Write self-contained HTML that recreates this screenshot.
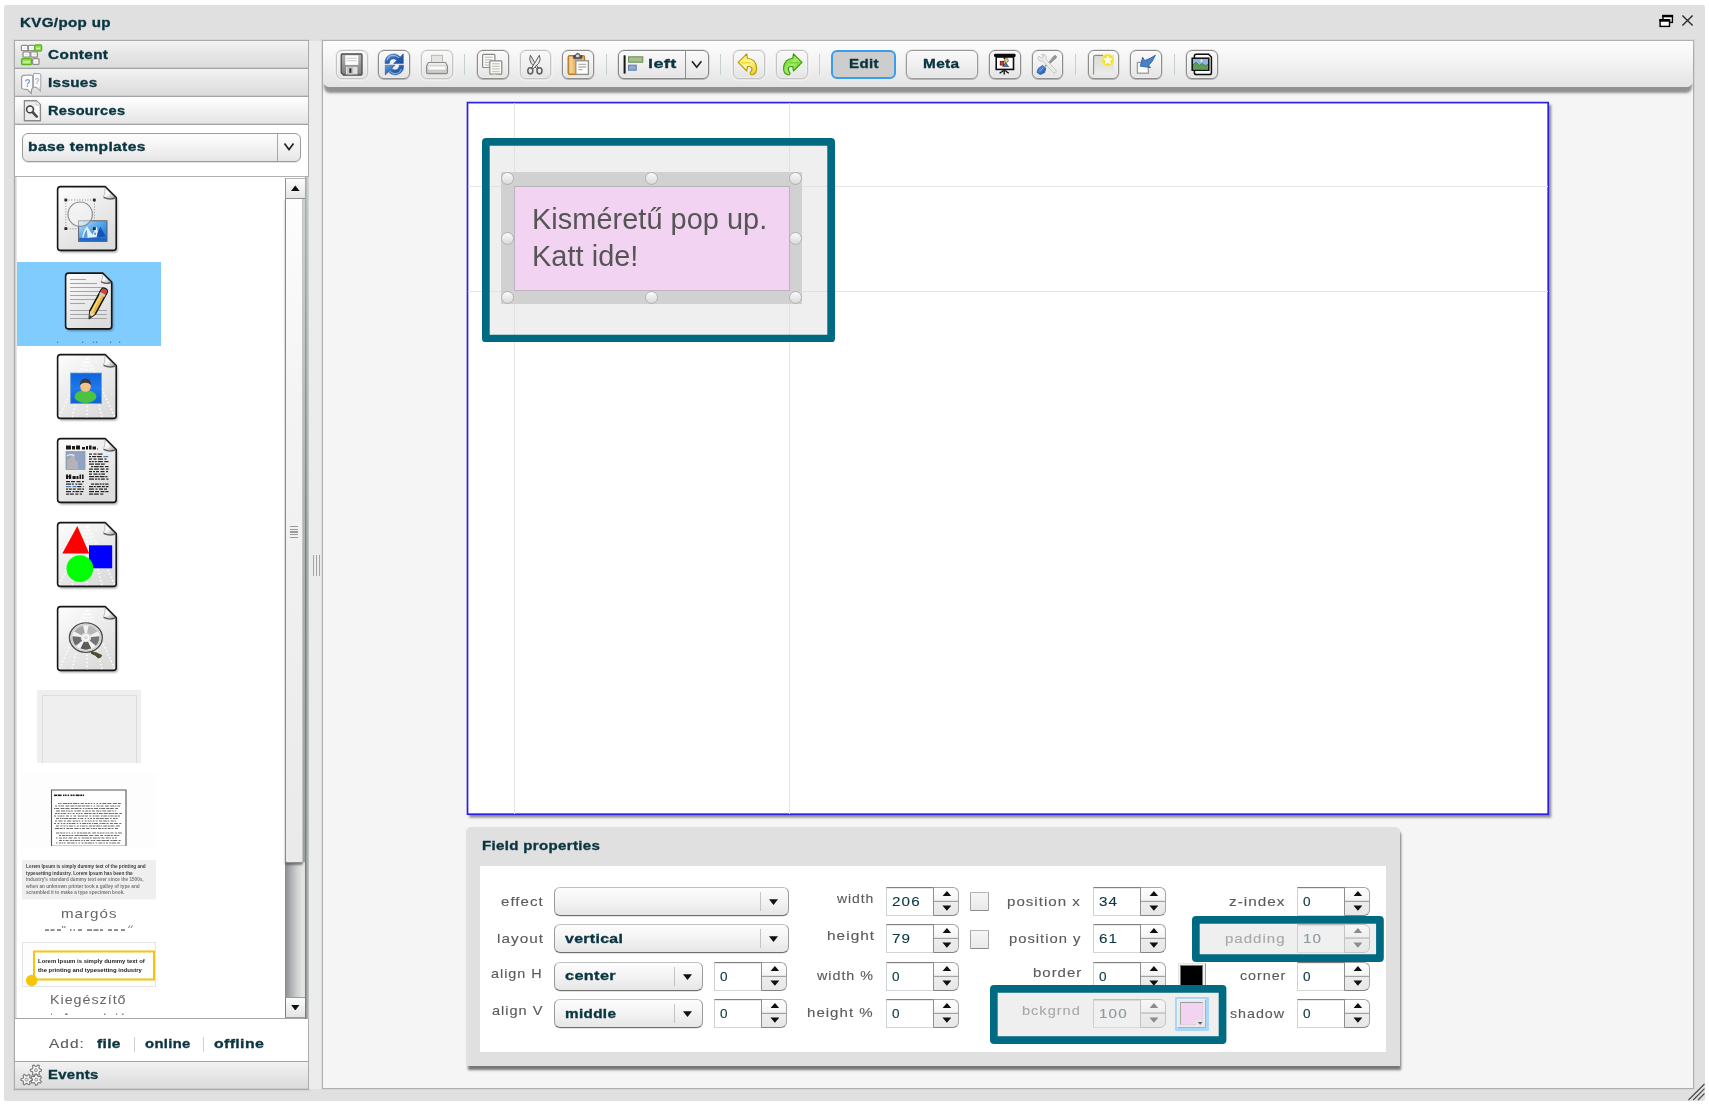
<!DOCTYPE html>
<html>
<head>
<meta charset="utf-8">
<title>KVG/pop up</title>
<style>
html,body{margin:0;padding:0;}
body{width:1709px;height:1108px;background:#fff;position:relative;overflow:hidden;font-family:"Liberation Sans",sans-serif;font-size:14px;color:#0a3742;}
.a{position:absolute;box-sizing:border-box;}
.t{position:absolute;white-space:pre;line-height:16px;transform-origin:0 0;}
.b{font-weight:700;color:#0a3540;-webkit-text-stroke:.35px #0a3540;}
.r{font-weight:400;color:#5a5a5a;-webkit-text-stroke:.12px currentColor;}
.win{left:4px;top:5px;width:1701px;height:1096px;background:#e0e0e0;border-radius:2px;}
.side{left:14px;top:40px;width:295px;height:1050px;background:#fff;border:1px solid #a8acaf;box-shadow:0 0 0 1px rgba(196,200,204,.4);}
.acc{left:15px;width:293px;height:28px;border-bottom:1px solid #a0a4a4;background:linear-gradient(#f3f3f3,#e7e7e7 45%,#dbdbdb);box-shadow:inset 0 -1px 0 rgba(170,174,174,.35);}
.acc.sel{background:linear-gradient(#ffffff,#f2f2f2 50%,#e4e4e4);}
.main{left:322px;top:40px;width:1372px;height:1049px;background:#f5f5f5;border:1px solid #adb1b4;box-shadow:0 0 0 1px rgba(196,200,204,.4);}
.tb{left:323px;top:41px;width:1370px;height:46px;background:linear-gradient(#fdfdfd,#f3f3f3 45%,#e3e3e3);border-radius:0 0 7px 7px;box-shadow:0 6.5px 2.5px -1px rgba(105,105,105,.72);}
.btn{top:50px;width:31px;height:29px;border:1px solid #c3c3c3;border-radius:6px;background:linear-gradient(#f9f9f9,#f0f0f0 50%,#e4e4e4);box-shadow:0 0 0 1px rgba(205,205,205,.35),0 0 0 2px rgba(255,255,255,.35),inset 0 0 0 1px rgba(255,255,255,.3);}
.btn.d{border-color:#8c8c8c;box-shadow:0 0 0 .5px rgba(140,140,140,.4),0 1px .5px 0 rgba(90,90,90,.28),inset 0 0 0 1px rgba(255,255,255,.3);}
.sep{top:54px;width:1px;height:21px;background:#c5d0d0;}
.canvas{left:466px;top:101px;width:1084px;height:715px;background:#fff;border:2px solid #2a22e6;box-shadow:2px 3px 3px rgba(0,0,0,.4);}
.gl{background:#e4e4e4;}
.hlf{background:rgba(222,222,222,.48);}
.hd{width:13px;height:13px;border-radius:7px;border:1px solid #b2b2b2;background:linear-gradient(#fafafa,#ececec 45%,#d9d9d9);}
.fp{left:466px;top:827px;width:934px;height:239px;background:#e0e0e0;border-radius:5px 5px 0 0;box-shadow:1.5px 4px 2.5px -.5px rgba(0,0,0,.52);}
.fpi{left:480px;top:866px;width:906px;height:186px;background:#fff;}
.cb{height:29px;border:1px solid #9a9a9a;border-top-color:#bcc0c0;border-bottom-color:#707070;border-radius:6px;background:linear-gradient(#fdfdfd,#f3f3f3 50%,#e6e6e6);box-shadow:0 .6px 0 rgba(0,0,0,.22);}
.cbs{width:1px;height:19px;background:#c4c4c4;}
.ar{width:9px;height:5.4px;background:#101010;}
.ar.dn{clip-path:polygon(0 0,100% 0,50% 100%);}
.ar.up{clip-path:polygon(50% 0,100% 100%,0 100%);}
.spi{height:29px;background:#fff;border:1px solid #d2d6d6;border-top-color:#808080;border-left-color:#cfd2d2;border-right:none;box-shadow:inset 0 .5px 0 rgba(120,120,120,.35);}
.spb{width:26px;height:29px;border:1px solid #a4a4a4;border-left-color:#8e8e8e;border-bottom-color:#858585;border-radius:0 6px 6px 0;background:linear-gradient(#ffffff,#f5f5f5 46%,#a2a2a2 47.5%,#a2a2a2 50%,#ededed 51.5%,#e7e7e7);}
.chk{width:19px;height:19px;border:1px solid #a6a6a6;border-top-color:#b6b6b6;border-bottom-color:#8c8c8c;background:linear-gradient(#f6f6f6,#e9e9e9);border-radius:1px;}
.num{color:#0a3742;}
.spi.dis{background:#f0f0f0;border-color:#dcdcdc;border-top-color:#bdbdbd;border-left-color:#cfcfcf}
.spb.dis{border-color:#c4c4c4;background:linear-gradient(#f7f7f7,#efefef 45%,#c9c9c9 46.5%,#c9c9c9 50%,#ebebeb 51.5%,#e7e7e7)}
.ar.dis{background:#8c8c8c}
</style>
</head>
<body>
<div id="root" style="position:absolute;left:0;top:0;width:1709px;height:1108px;filter:blur(.45px)">
<div class="a win"></div>
<div class="t b" style="left:19.5px;top:15.3px;font-size:13.4px;letter-spacing:0.3px;transform:scaleX(1.132)">KVG/pop up</div>
<div class="a side"></div>
<div class="a acc" style="top:41px"></div><div class="a acc" style="top:69px"></div><div class="a acc sel" style="top:97px"></div>
<div class="t b" style="left:47.7px;top:47.0px;font-size:13.4px;letter-spacing:0.3px;transform:scaleX(1.145)">Content</div>
<div class="t b" style="left:47.7px;top:75.0px;font-size:13.4px;letter-spacing:0.3px;transform:scaleX(1.138)">Issues</div>
<div class="t b" style="left:47.7px;top:102.9px;font-size:13.4px;letter-spacing:0.3px;transform:scaleX(1.086)">Resources</div>
<div class="a" style="left:15px;top:176px;width:293px;height:843px;border-top:1px solid #aeb2b2;border-bottom:1px solid #a4a8a8;"></div>
<div class="a" style="left:15px;top:177px;width:2px;height:841px;background:linear-gradient(90deg,#c9cdcd,#eceeee)"></div>
<div class="a" style="left:17px;top:262px;width:144px;height:84px;background:#80ccff"></div>
<svg class="a" style="left:0;top:0" width="320" height="1108" viewBox="0 0 320 1108">
<defs>
<linearGradient id="dg" x1="0" y1="0" x2="0.6" y2="1"><stop offset="0" stop-color="#fdfdfd"/><stop offset="1" stop-color="#dddddd"/></linearGradient>
<linearGradient id="fg" x1="0" y1="0" x2="1" y2="1"><stop offset="0" stop-color="#ffffff"/><stop offset=".45" stop-color="#fafafa"/><stop offset="1" stop-color="#9c9c9c"/></linearGradient>
<linearGradient id="bl" x1="0" y1="0" x2="0" y2="1"><stop offset="0" stop-color="#0d63dc"/><stop offset=".5" stop-color="#1f7aea"/><stop offset="1" stop-color="#0e60d6"/></linearGradient>
<linearGradient id="bl2" x1="0" y1="0" x2="1" y2="1"><stop offset="0" stop-color="#d6ecfa"/><stop offset=".35" stop-color="#6cb4ee"/><stop offset=".7" stop-color="#2f8ce2"/><stop offset="1" stop-color="#2274d0"/></linearGradient>
<radialGradient id="rl" cx=".4" cy=".3" r=".8"><stop offset="0" stop-color="#ffffff"/><stop offset=".6" stop-color="#c8c8c8"/><stop offset="1" stop-color="#777"/></radialGradient>
<filter id="ds" x="-10%" y="-10%" width="125%" height="125%"><feGaussianBlur stdDeviation="1"/></filter>
<filter id="b1"><feGaussianBlur stdDeviation=".6"/></filter>
</defs>
<path d="M60.6,186.6 H105.2 L116.2,197.6 V247.39999999999998 Q116.2,250.39999999999998 113.2,250.39999999999998 H60.6 Q57.6,250.39999999999998 57.6,247.39999999999998 V189.6 Q57.6,186.6 60.6,186.6 Z" transform="translate(1.5,2)" fill="#000" opacity=".35" filter="url(#ds)"/>
<path d="M60.6,186.6 H105.2 L116.2,197.6 V247.39999999999998 Q116.2,250.39999999999998 113.2,250.39999999999998 H60.6 Q57.6,250.39999999999998 57.6,247.39999999999998 V189.6 Q57.6,186.6 60.6,186.6 Z" fill="url(#dg)" stroke="#161616" stroke-width="1.6" stroke-linejoin="round"/>
<path d="M104.9,187.6 L115.2,197.9 Q109.2,199.79999999999998 103.60000000000001,197.0 Q105.8,191.6 104.9,187.6 Z" fill="url(#fg)" stroke="#9a9a9a" stroke-width=".6"/>
<path d="M115.2,198.2 Q109.2,200.2 103.60000000000001,197.4" fill="none" stroke="#2c2c2c" stroke-width="1.3" opacity=".7" filter="url(#b1)"/>
<rect x="65.8" y="200" width="28.6" height="28.8" fill="none" stroke="#8a8a8a" stroke-width="1" stroke-dasharray="1 1.7"/>
<rect x="78.6" y="220.8" width="28.4" height="20.6" fill="url(#bl2)" stroke="#5c6068" stroke-width="1"/>
<g filter="url(#b1)"><path d="M82,238.5 Q83.5,229.5 87.3,226.6 Q89.5,231 92.6,234.6 Q95,229.5 96.8,226.4 L98,233 L96.4,237 L88,238 Z" fill="#f2f8fd" opacity=".92"/><path d="M97.2,233.5 L100.4,226.8 L105.8,236.4 L97.4,237.4 Z" fill="#1a4cac" opacity=".9"/><path d="M83.5,238 Q84.5,232 86.8,229.5 L87.6,237.6 Z" fill="#3a82d4" opacity=".8"/><rect x="79.2" y="237.8" width="27.2" height="3" fill="#1c62c2" opacity=".9"/><rect x="94.4" y="232.6" width="1.4" height="2.4" fill="#5a7ac8"/></g>
<circle cx="80.2" cy="214.2" r="12.2" fill="#f6f6f6" fill-opacity=".45" stroke="#848484" stroke-width="1.2" stroke-opacity=".9"/>
<rect x="64.39999999999999" y="198.6" width="2.8" height="2.8" fill="#262626"/>
<rect x="92.89999999999999" y="198.6" width="2.8" height="2.8" fill="#262626"/>
<rect x="64.39999999999999" y="227.2" width="2.8" height="2.8" fill="#262626"/>
<rect x="92.89999999999999" y="227.2" width="2.8" height="2.8" fill="#262626"/>
<path d="M68.6,273.1 H102.69999999999999 L111.69999999999999,282.1 V325.90000000000003 Q111.69999999999999,328.90000000000003 108.69999999999999,328.90000000000003 H68.6 Q65.6,328.90000000000003 65.6,325.90000000000003 V276.1 Q65.6,273.1 68.6,273.1 Z" transform="translate(1.5,2)" fill="#000" opacity=".35" filter="url(#ds)"/>
<path d="M68.6,273.1 H102.69999999999999 L111.69999999999999,282.1 V325.90000000000003 Q111.69999999999999,328.90000000000003 108.69999999999999,328.90000000000003 H68.6 Q65.6,328.90000000000003 65.6,325.90000000000003 V276.1 Q65.6,273.1 68.6,273.1 Z" fill="url(#dg)" stroke="#161616" stroke-width="1.6" stroke-linejoin="round"/>
<path d="M102.39999999999999,274.1 L110.69999999999999,282.40000000000003 Q106.69999999999999,284.3 101.1,281.5 Q103.29999999999998,278.1 102.39999999999999,274.1 Z" fill="url(#fg)" stroke="#9a9a9a" stroke-width=".6"/>
<path d="M110.69999999999999,282.70000000000005 Q106.69999999999999,284.70000000000005 101.1,281.90000000000003" fill="none" stroke="#2c2c2c" stroke-width="1.3" opacity=".7" filter="url(#b1)"/>
<line x1="70" y1="279.5" x2="86" y2="279.5" stroke="#a5a5a5" stroke-width="1.1"/>
<line x1="70" y1="283.5" x2="97" y2="283.5" stroke="#a5a5a5" stroke-width="1.1"/>
<line x1="70" y1="287.5" x2="103" y2="287.5" stroke="#a5a5a5" stroke-width="1.1"/>
<line x1="70" y1="291.5" x2="103" y2="291.5" stroke="#a5a5a5" stroke-width="1.1"/>
<line x1="70" y1="295.5" x2="103" y2="295.5" stroke="#a5a5a5" stroke-width="1.1"/>
<line x1="70" y1="299.5" x2="103" y2="299.5" stroke="#a5a5a5" stroke-width="1.1"/>
<line x1="70" y1="303.5" x2="85" y2="303.5" stroke="#a5a5a5" stroke-width="1.1"/>
<line x1="70" y1="310.5" x2="107" y2="310.5" stroke="#a5a5a5" stroke-width="1.1"/>
<line x1="70" y1="314.5" x2="107" y2="314.5" stroke="#a5a5a5" stroke-width="1.1"/>
<line x1="70" y1="318.5" x2="107" y2="318.5" stroke="#a5a5a5" stroke-width="1.1"/>
<g transform="translate(89.3,318.5) rotate(-61.5)"><path d="M0,0 L7,-3.2 H31 Q34,-3.2 34,0 Q34,3.2 31,3.2 H7 Z" fill="#e9b93f" stroke="#141414" stroke-width="1.5" stroke-linejoin="round"/><path d="M7,-1 H29" stroke="#f7dc8a" stroke-width="1.4"/><path d="M28.5,-3 H31 Q33.6,-3 33.6,0 Q33.6,3 31,3 H28.5 Z" fill="#d2453a"/><path d="M26,-3 H28.5 V3 H26 Z" fill="#c9c9c9"/><path d="M0,0 L7,-3 V3 Z" fill="#e8cfa4"/><path d="M0,0 L3,-1.4 V1.4 Z" fill="#222"/></g>
<rect x="57" y="341.6" width="1.2" height="1.4" fill="#4d7f9e"/>
<rect x="82" y="341.6" width="1.2" height="1.4" fill="#4d7f9e"/>
<rect x="93" y="341.6" width="1.2" height="1.4" fill="#4d7f9e"/>
<rect x="96" y="341.6" width="1.2" height="1.4" fill="#4d7f9e"/>
<rect x="110" y="341.6" width="1.2" height="1.4" fill="#4d7f9e"/>
<rect x="119" y="341.6" width="1.2" height="1.4" fill="#4d7f9e"/>
<path d="M60.6,354.6 H105.2 L116.2,365.6 V415.40000000000003 Q116.2,418.40000000000003 113.2,418.40000000000003 H60.6 Q57.6,418.40000000000003 57.6,415.40000000000003 V357.6 Q57.6,354.6 60.6,354.6 Z" transform="translate(1.5,2)" fill="#000" opacity=".35" filter="url(#ds)"/>
<path d="M60.6,354.6 H105.2 L116.2,365.6 V415.40000000000003 Q116.2,418.40000000000003 113.2,418.40000000000003 H60.6 Q57.6,418.40000000000003 57.6,415.40000000000003 V357.6 Q57.6,354.6 60.6,354.6 Z" fill="url(#dg)" stroke="#161616" stroke-width="1.6" stroke-linejoin="round"/>
<path d="M104.9,355.6 L115.2,365.90000000000003 Q109.2,367.8 103.60000000000001,365.0 Q105.8,359.6 104.9,355.6 Z" fill="url(#fg)" stroke="#9a9a9a" stroke-width=".6"/>
<path d="M115.2,366.20000000000005 Q109.2,368.20000000000005 103.60000000000001,365.40000000000003" fill="none" stroke="#2c2c2c" stroke-width="1.3" opacity=".7" filter="url(#b1)"/>
<line x1="85.9" y1="358" x2="59" y2="417.5" stroke="#fff" stroke-width="1.5" stroke-dasharray="1.5 2.2"/>
<line x1="86.4" y1="358" x2="72" y2="417.5" stroke="#fff" stroke-width="1.5" stroke-dasharray="1.5 2.2"/>
<line x1="87.0" y1="358" x2="87" y2="417.5" stroke="#fff" stroke-width="1.5" stroke-dasharray="1.5 2.2"/>
<line x1="87.6" y1="358" x2="102" y2="417.5" stroke="#fff" stroke-width="1.5" stroke-dasharray="1.5 2.2"/>
<line x1="88.1" y1="358" x2="115" y2="417.5" stroke="#fff" stroke-width="1.5" stroke-dasharray="1.5 2.2"/>
<rect x="70.5" y="373" width="31" height="30.5" fill="url(#bl)" stroke="#6f9fd6" stroke-width=".8"/>
<g filter="url(#b1)"><ellipse cx="85.5" cy="396.5" rx="11" ry="6.5" fill="#4dc23f"/><circle cx="85.5" cy="386.5" r="5.3" fill="#f2c48a"/><path d="M79.8,385 Q80,378.5 85.5,378.5 Q91,378.5 91.2,385 Q88,382.5 85.5,382.8 Q83,382.5 79.8,385 Z" fill="#3a3a3a"/></g>
<path d="M60.6,438.6 H105.2 L116.2,449.6 V499.40000000000003 Q116.2,502.40000000000003 113.2,502.40000000000003 H60.6 Q57.6,502.40000000000003 57.6,499.40000000000003 V441.6 Q57.6,438.6 60.6,438.6 Z" transform="translate(1.5,2)" fill="#000" opacity=".35" filter="url(#ds)"/>
<path d="M60.6,438.6 H105.2 L116.2,449.6 V499.40000000000003 Q116.2,502.40000000000003 113.2,502.40000000000003 H60.6 Q57.6,502.40000000000003 57.6,499.40000000000003 V441.6 Q57.6,438.6 60.6,438.6 Z" fill="url(#dg)" stroke="#161616" stroke-width="1.6" stroke-linejoin="round"/>
<path d="M104.9,439.6 L115.2,449.90000000000003 Q109.2,451.8 103.60000000000001,449.0 Q105.8,443.6 104.9,439.6 Z" fill="url(#fg)" stroke="#9a9a9a" stroke-width=".6"/>
<path d="M115.2,450.20000000000005 Q109.2,452.20000000000005 103.60000000000001,449.40000000000003" fill="none" stroke="#2c2c2c" stroke-width="1.3" opacity=".7" filter="url(#b1)"/>
<g fill="#1c1c1c">
<rect x="66" y="445.5" width="5" height="4"/><rect x="72" y="446" width="3" height="3.5"/><rect x="76" y="445.5" width="4" height="4"/><rect x="82" y="447" width="3" height="2.5"/><rect x="86" y="446" width="2" height="3.5"/><rect x="89" y="445.5" width="2.5" height="4"/><rect x="92.5" y="446.5" width="3.5" height="3"/><rect x="97" y="448.5" width="1" height="1"/>
<rect x="66" y="474.5" width="2.2" height="4.5"/><rect x="69" y="474.5" width="2.2" height="4.5"/><rect x="67" y="476.3" width="3" height="1"/><rect x="72.5" y="476" width="3.2" height="3"/><rect x="76.5" y="476" width="2" height="3"/><rect x="79.5" y="474.5" width="1.6" height="4.5"/><rect x="82" y="474.5" width="1.6" height="4.5"/>
</g>
<rect x="66" y="451.5" width="19" height="18" fill="#8fa4c4" stroke="#9a9a9a" stroke-width=".8"/><path d="M67,469 V460 l4,-3 v-3 h4 v6 l3,2 v7 z" fill="#b9b4b4" opacity=".9" filter="url(#b1)"/><path d="M67,456 q4,-3 7,0" stroke="#dfe8f4" stroke-width="1.5" fill="none" filter="url(#b1)"/>
<rect x="89.0" y="453.5" width="3.0" height="1.2" fill="#222"/>
<rect x="93.5" y="453.5" width="3.0" height="1.2" fill="#222"/>
<rect x="97.5" y="453.5" width="5.0" height="1.2" fill="#222"/>
<rect x="89.0" y="456" width="2.0" height="1.2" fill="#222"/>
<rect x="92.0" y="456" width="4.0" height="1.2" fill="#222"/>
<rect x="96.8" y="456" width="5.0" height="1.2" fill="#222"/>
<rect x="103.3" y="456" width="5.0" height="1.2" fill="#4a78b0"/>
<rect x="89.0" y="458.5" width="3.0" height="1.2" fill="#222"/>
<rect x="93.5" y="458.5" width="3.0" height="1.2" fill="#222"/>
<rect x="98.0" y="458.5" width="5.0" height="1.2" fill="#222"/>
<rect x="104.5" y="458.5" width="2.0" height="1.2" fill="#222"/>
<rect x="89.0" y="461" width="2.0" height="1.2" fill="#222"/>
<rect x="91.8" y="461" width="2.0" height="1.2" fill="#222"/>
<rect x="94.8" y="461" width="2.0" height="1.2" fill="#222"/>
<rect x="97.8" y="461" width="5.0" height="1.2" fill="#222"/>
<rect x="104.3" y="461" width="4.2" height="1.2" fill="#222"/>
<rect x="89.0" y="463.5" width="5.0" height="1.2" fill="#222"/>
<rect x="95.0" y="463.5" width="5.0" height="1.2" fill="#222"/>
<rect x="100.8" y="463.5" width="4.0" height="1.2" fill="#222"/>
<rect x="91.0" y="466" width="2.0" height="1.2" fill="#222"/>
<rect x="93.8" y="466" width="5.0" height="1.2" fill="#222"/>
<rect x="99.6" y="466" width="4.0" height="1.2" fill="#222"/>
<rect x="105.1" y="466" width="3.4" height="1.2" fill="#222"/>
<rect x="89.0" y="468.5" width="4.0" height="1.2" fill="#222"/>
<rect x="94.0" y="468.5" width="5.0" height="1.2" fill="#222"/>
<rect x="100.5" y="468.5" width="4.0" height="1.2" fill="#222"/>
<rect x="106.0" y="468.5" width="2.5" height="1.2" fill="#222"/>
<rect x="89.0" y="471" width="3.0" height="1.2" fill="#222"/>
<rect x="93.0" y="471" width="2.0" height="1.2" fill="#222"/>
<rect x="96.0" y="471" width="3.0" height="1.2" fill="#222"/>
<rect x="100.5" y="471" width="4.0" height="1.2" fill="#222"/>
<rect x="106.0" y="471" width="2.0" height="1.2" fill="#222"/>
<rect x="89.0" y="473.5" width="3.0" height="1.2" fill="#222"/>
<rect x="93.5" y="473.5" width="4.0" height="1.2" fill="#222"/>
<rect x="98.5" y="473.5" width="2.0" height="1.2" fill="#222"/>
<rect x="101.3" y="473.5" width="3.7" height="1.2" fill="#222"/>
<rect x="89.0" y="476" width="5.0" height="1.2" fill="#222"/>
<rect x="94.8" y="476" width="4.0" height="1.2" fill="#222"/>
<rect x="99.6" y="476" width="5.0" height="1.2" fill="#222"/>
<rect x="105.4" y="476" width="2.0" height="1.2" fill="#222"/>
<rect x="89.0" y="478.5" width="5.0" height="1.2" fill="#222"/>
<rect x="95.0" y="478.5" width="2.0" height="1.2" fill="#222"/>
<rect x="97.8" y="478.5" width="2.0" height="1.2" fill="#222"/>
<rect x="100.8" y="478.5" width="4.0" height="1.2" fill="#222"/>
<rect x="106.3" y="478.5" width="2.2" height="1.2" fill="#222"/>
<rect x="91.0" y="483.5" width="3.0" height="1.2" fill="#222"/>
<rect x="94.8" y="483.5" width="4.0" height="1.2" fill="#222"/>
<rect x="99.6" y="483.5" width="2.0" height="1.2" fill="#222"/>
<rect x="102.4" y="483.5" width="2.0" height="1.2" fill="#222"/>
<rect x="105.2" y="483.5" width="3.3" height="1.2" fill="#222"/>
<rect x="89.0" y="486" width="4.0" height="1.2" fill="#222"/>
<rect x="93.8" y="486" width="2.0" height="1.2" fill="#222"/>
<rect x="96.8" y="486" width="4.0" height="1.2" fill="#222"/>
<rect x="101.8" y="486" width="3.0" height="1.2" fill="#222"/>
<rect x="105.8" y="486" width="2.7" height="1.2" fill="#222"/>
<rect x="89.0" y="488.5" width="5.0" height="1.2" fill="#222"/>
<rect x="95.5" y="488.5" width="2.0" height="1.2" fill="#222"/>
<rect x="99.0" y="488.5" width="4.0" height="1.2" fill="#222"/>
<rect x="104.0" y="488.5" width="3.0" height="1.2" fill="#222"/>
<rect x="89.0" y="491" width="5.0" height="1.2" fill="#222"/>
<rect x="95.0" y="491" width="4.0" height="1.2" fill="#222"/>
<rect x="100.5" y="491" width="4.0" height="1.2" fill="#222"/>
<rect x="105.3" y="491" width="3.2" height="1.2" fill="#222"/>
<rect x="89.0" y="493.5" width="4.0" height="1.2" fill="#222"/>
<rect x="93.8" y="493.5" width="5.0" height="1.2" fill="#222"/>
<rect x="100.3" y="493.5" width="3.0" height="1.2" fill="#222"/>
<rect x="66.0" y="481" width="4.0" height="1.2" fill="#222"/>
<rect x="71.0" y="481" width="4.0" height="1.2" fill="#222"/>
<rect x="76.5" y="481" width="4.0" height="1.2" fill="#222"/>
<rect x="82.0" y="481" width="2.0" height="1.2" fill="#222"/>
<rect x="66.0" y="483.5" width="5.0" height="1.2" fill="#222"/>
<rect x="71.8" y="483.5" width="2.0" height="1.2" fill="#222"/>
<rect x="75.3" y="483.5" width="2.0" height="1.2" fill="#222"/>
<rect x="78.3" y="483.5" width="4.0" height="1.2" fill="#222"/>
<rect x="66.0" y="486" width="5.0" height="1.2" fill="#4a78b0"/>
<rect x="72.5" y="486" width="4.0" height="1.2" fill="#4a78b0"/>
<rect x="77.3" y="486" width="4.0" height="1.2" fill="#222"/>
<rect x="82.8" y="486" width="1.2" height="1.2" fill="#4a78b0"/>
<rect x="66.0" y="488.5" width="2.0" height="1.2" fill="#222"/>
<rect x="68.8" y="488.5" width="3.0" height="1.2" fill="#222"/>
<rect x="72.8" y="488.5" width="3.0" height="1.2" fill="#222"/>
<rect x="77.3" y="488.5" width="4.0" height="1.2" fill="#222"/>
<rect x="82.1" y="488.5" width="1.9" height="1.2" fill="#222"/>
<rect x="66.0" y="491" width="5.0" height="1.2" fill="#222"/>
<rect x="72.5" y="491" width="2.0" height="1.2" fill="#222"/>
<rect x="75.3" y="491" width="4.0" height="1.2" fill="#222"/>
<rect x="80.3" y="491" width="3.0" height="1.2" fill="#222"/>
<rect x="66.0" y="493.5" width="3.0" height="1.2" fill="#222"/>
<rect x="69.8" y="493.5" width="4.0" height="1.2" fill="#222"/>
<rect x="75.3" y="493.5" width="3.0" height="1.2" fill="#222"/>
<rect x="79.8" y="493.5" width="2.2" height="1.2" fill="#222"/>
<path d="M60.6,522.6 H105.2 L116.2,533.6 V583.4 Q116.2,586.4 113.2,586.4 H60.6 Q57.6,586.4 57.6,583.4 V525.6 Q57.6,522.6 60.6,522.6 Z" transform="translate(1.5,2)" fill="#000" opacity=".35" filter="url(#ds)"/>
<path d="M60.6,522.6 H105.2 L116.2,533.6 V583.4 Q116.2,586.4 113.2,586.4 H60.6 Q57.6,586.4 57.6,583.4 V525.6 Q57.6,522.6 60.6,522.6 Z" fill="url(#dg)" stroke="#161616" stroke-width="1.6" stroke-linejoin="round"/>
<path d="M104.9,523.6 L115.2,533.9 Q109.2,535.8000000000001 103.60000000000001,533.0 Q105.8,527.6 104.9,523.6 Z" fill="url(#fg)" stroke="#9a9a9a" stroke-width=".6"/>
<path d="M115.2,534.2 Q109.2,536.2 103.60000000000001,533.4" fill="none" stroke="#2c2c2c" stroke-width="1.3" opacity=".7" filter="url(#b1)"/>
<line x1="85.9" y1="526" x2="59" y2="585.5" stroke="#fff" stroke-width="1.5" stroke-dasharray="1.5 2.2"/>
<line x1="86.4" y1="526" x2="72" y2="585.5" stroke="#fff" stroke-width="1.5" stroke-dasharray="1.5 2.2"/>
<line x1="87.0" y1="526" x2="87" y2="585.5" stroke="#fff" stroke-width="1.5" stroke-dasharray="1.5 2.2"/>
<line x1="87.6" y1="526" x2="102" y2="585.5" stroke="#fff" stroke-width="1.5" stroke-dasharray="1.5 2.2"/>
<line x1="88.1" y1="526" x2="115" y2="585.5" stroke="#fff" stroke-width="1.5" stroke-dasharray="1.5 2.2"/>
<path d="M77.3,526 L62.3,553.5 H89.2 Z" fill="#ff0000"/>
<rect x="89" y="545.3" width="23.2" height="23" fill="#0000ff"/>
<circle cx="79.9" cy="568.6" r="13.4" fill="#00ff00"/>
<path d="M60.6,606.6 H105.2 L116.2,617.6 V667.4 Q116.2,670.4 113.2,670.4 H60.6 Q57.6,670.4 57.6,667.4 V609.6 Q57.6,606.6 60.6,606.6 Z" transform="translate(1.5,2)" fill="#000" opacity=".35" filter="url(#ds)"/>
<path d="M60.6,606.6 H105.2 L116.2,617.6 V667.4 Q116.2,670.4 113.2,670.4 H60.6 Q57.6,670.4 57.6,667.4 V609.6 Q57.6,606.6 60.6,606.6 Z" fill="url(#dg)" stroke="#161616" stroke-width="1.6" stroke-linejoin="round"/>
<path d="M104.9,607.6 L115.2,617.9 Q109.2,619.8000000000001 103.60000000000001,617.0 Q105.8,611.6 104.9,607.6 Z" fill="url(#fg)" stroke="#9a9a9a" stroke-width=".6"/>
<path d="M115.2,618.2 Q109.2,620.2 103.60000000000001,617.4" fill="none" stroke="#2c2c2c" stroke-width="1.3" opacity=".7" filter="url(#b1)"/>
<line x1="85.9" y1="610" x2="59" y2="669.5" stroke="#fff" stroke-width="1.5" stroke-dasharray="1.5 2.2"/>
<line x1="86.4" y1="610" x2="72" y2="669.5" stroke="#fff" stroke-width="1.5" stroke-dasharray="1.5 2.2"/>
<line x1="87.0" y1="610" x2="87" y2="669.5" stroke="#fff" stroke-width="1.5" stroke-dasharray="1.5 2.2"/>
<line x1="87.6" y1="610" x2="102" y2="669.5" stroke="#fff" stroke-width="1.5" stroke-dasharray="1.5 2.2"/>
<line x1="88.1" y1="610" x2="115" y2="669.5" stroke="#fff" stroke-width="1.5" stroke-dasharray="1.5 2.2"/>
<g transform="translate(85.9,637.6) scale(1,.9)"><circle r="16.4" fill="#f2f2f2" stroke="#505050" stroke-width="1.5"/><circle r="14.6" fill="none" stroke="#cfcfcf" stroke-width="1.6"/>
<path d="M1.08,-5.09 L2.79,-13.11 A13.4,13.4 0 0 1 11.60,-6.70 L4.50,-2.60 A5.2,5.2 0 0 0 1.08,-5.09 Z" fill="#4c4c4c" opacity="0.35" filter="url(#b1)"/>
<path d="M5.17,-0.54 L13.33,-1.40 A13.4,13.4 0 0 1 9.96,8.97 L3.86,3.48 A5.2,5.2 0 0 0 5.17,-0.54 Z" fill="#4c4c4c" opacity="0.75" filter="url(#b1)"/>
<path d="M2.12,4.75 L5.45,12.24 A13.4,13.4 0 0 1 -5.45,12.24 L-2.12,4.75 A5.2,5.2 0 0 0 2.12,4.75 Z" fill="#4c4c4c" opacity="0.9" filter="url(#b1)"/>
<path d="M-3.86,3.48 L-9.96,8.97 A13.4,13.4 0 0 1 -13.33,-1.40 L-5.17,-0.54 A5.2,5.2 0 0 0 -3.86,3.48 Z" fill="#4c4c4c" opacity="0.8" filter="url(#b1)"/>
<path d="M-4.50,-2.60 L-11.60,-6.70 A13.4,13.4 0 0 1 -2.79,-13.11 L-1.08,-5.09 A5.2,5.2 0 0 0 -4.50,-2.60 Z" fill="#4c4c4c" opacity="0.45" filter="url(#b1)"/>
<circle r="4.2" fill="#fbfbfb" stroke="#c4c4c4" stroke-width=".7"/><circle r="1.5" fill="#e6e6e6" stroke="#b0b0b0" stroke-width=".5"/></g>
<path d="M91.5,651.8 q5.5,.6 10.3,3.6 q-.6,2.4 -3.6,2.6 q-2.4,-3.2 -6.7,-4.4 z" fill="#5a4a32" stroke="#352c1c" stroke-width=".7" filter="url(#b1)"/>
<rect x="37" y="690" width="104" height="73" fill="#efefef"/>
<path d="M42.5,763 V695.5 H136.5 V763" fill="none" stroke="#dcdcdc" stroke-width="1"/>
<rect x="21.5" y="773.5" width="134.5" height="73.5" fill="#fdfdfd"/>
<path d="M51.5,846 V790 H126 V846" fill="#fff" stroke="#555" stroke-width="1.1"/>
<rect x="54.0" y="794.5" width="3.0" height="1.6" fill="#222" opacity="1"/>
<rect x="57.6" y="794.5" width="4.0" height="1.6" fill="#222" opacity="1"/>
<rect x="63.0" y="794.5" width="1.5" height="1.6" fill="#222" opacity="1"/>
<rect x="65.1" y="794.5" width="1.5" height="1.6" fill="#222" opacity="1"/>
<rect x="67.6" y="794.5" width="1.5" height="1.6" fill="#222" opacity="1"/>
<rect x="70.5" y="794.5" width="2.0" height="1.6" fill="#222" opacity="1"/>
<rect x="73.1" y="794.5" width="1.5" height="1.6" fill="#222" opacity="1"/>
<rect x="75.6" y="794.5" width="4.0" height="1.6" fill="#222" opacity="1"/>
<rect x="80.2" y="794.5" width="2.0" height="1.6" fill="#222" opacity="1"/>
<rect x="82.8" y="794.5" width="1.2" height="1.6" fill="#222" opacity="1"/>
<rect x="58.0" y="803" width="1.5" height="1" fill="#333" opacity="0.72"/>
<rect x="60.1" y="803" width="1.5" height="1" fill="#333" opacity="0.72"/>
<rect x="63.0" y="803" width="4.0" height="1" fill="#333" opacity="0.72"/>
<rect x="67.6" y="803" width="2.0" height="1" fill="#333" opacity="0.72"/>
<rect x="70.2" y="803" width="2.0" height="1" fill="#333" opacity="0.72"/>
<rect x="73.2" y="803" width="4.0" height="1" fill="#333" opacity="0.72"/>
<rect x="77.8" y="803" width="1.5" height="1" fill="#333" opacity="0.72"/>
<rect x="80.7" y="803" width="3.0" height="1" fill="#333" opacity="0.72"/>
<rect x="85.1" y="803" width="2.0" height="1" fill="#333" opacity="0.72"/>
<rect x="87.7" y="803" width="2.0" height="1" fill="#333" opacity="0.72"/>
<rect x="90.7" y="803" width="1.5" height="1" fill="#333" opacity="0.72"/>
<rect x="93.6" y="803" width="1.5" height="1" fill="#333" opacity="0.72"/>
<rect x="96.5" y="803" width="1.5" height="1" fill="#333" opacity="0.72"/>
<rect x="99.4" y="803" width="2.0" height="1" fill="#333" opacity="0.72"/>
<rect x="102.4" y="803" width="4.0" height="1" fill="#333" opacity="0.72"/>
<rect x="107.4" y="803" width="4.0" height="1" fill="#333" opacity="0.72"/>
<rect x="112.8" y="803" width="4.0" height="1" fill="#333" opacity="0.72"/>
<rect x="117.8" y="803" width="3.0" height="1" fill="#333" opacity="0.72"/>
<rect x="55.0" y="805.5" width="2.0" height="1" fill="#333" opacity="0.72"/>
<rect x="58.4" y="805.5" width="2.0" height="1" fill="#333" opacity="0.72"/>
<rect x="61.0" y="805.5" width="3.0" height="1" fill="#333" opacity="0.72"/>
<rect x="65.4" y="805.5" width="4.0" height="1" fill="#333" opacity="0.72"/>
<rect x="70.4" y="805.5" width="4.0" height="1" fill="#333" opacity="0.72"/>
<rect x="75.4" y="805.5" width="1.5" height="1" fill="#333" opacity="0.72"/>
<rect x="77.5" y="805.5" width="4.0" height="1" fill="#333" opacity="0.72"/>
<rect x="82.1" y="805.5" width="3.0" height="1" fill="#333" opacity="0.72"/>
<rect x="85.7" y="805.5" width="4.0" height="1" fill="#333" opacity="0.72"/>
<rect x="90.7" y="805.5" width="1.5" height="1" fill="#333" opacity="0.72"/>
<rect x="93.6" y="805.5" width="1.5" height="1" fill="#333" opacity="0.72"/>
<rect x="96.5" y="805.5" width="3.0" height="1" fill="#333" opacity="0.72"/>
<rect x="100.5" y="805.5" width="3.0" height="1" fill="#333" opacity="0.72"/>
<rect x="104.9" y="805.5" width="4.0" height="1" fill="#333" opacity="0.72"/>
<rect x="110.3" y="805.5" width="4.0" height="1" fill="#333" opacity="0.72"/>
<rect x="114.9" y="805.5" width="1.5" height="1" fill="#333" opacity="0.72"/>
<rect x="117.4" y="805.5" width="2.6" height="1" fill="#333" opacity="0.72"/>
<rect x="54.0" y="808" width="1.5" height="1" fill="#333" opacity="0.72"/>
<rect x="56.1" y="808" width="3.0" height="1" fill="#333" opacity="0.72"/>
<rect x="60.5" y="808" width="4.0" height="1" fill="#333" opacity="0.72"/>
<rect x="65.5" y="808" width="4.0" height="1" fill="#333" opacity="0.72"/>
<rect x="70.9" y="808" width="3.0" height="1" fill="#333" opacity="0.72"/>
<rect x="74.5" y="808" width="4.0" height="1" fill="#333" opacity="0.72"/>
<rect x="79.5" y="808" width="2.0" height="1" fill="#333" opacity="0.72"/>
<rect x="82.9" y="808" width="1.5" height="1" fill="#333" opacity="0.72"/>
<rect x="85.4" y="808" width="1.5" height="1" fill="#333" opacity="0.72"/>
<rect x="87.5" y="808" width="3.0" height="1" fill="#333" opacity="0.72"/>
<rect x="91.1" y="808" width="2.0" height="1" fill="#333" opacity="0.72"/>
<rect x="94.1" y="808" width="4.0" height="1" fill="#333" opacity="0.72"/>
<rect x="99.1" y="808" width="1.5" height="1" fill="#333" opacity="0.72"/>
<rect x="101.2" y="808" width="4.0" height="1" fill="#333" opacity="0.72"/>
<rect x="106.2" y="808" width="3.0" height="1" fill="#333" opacity="0.72"/>
<rect x="109.8" y="808" width="4.0" height="1" fill="#333" opacity="0.72"/>
<rect x="115.2" y="808" width="2.8" height="1" fill="#333" opacity="0.72"/>
<rect x="56.0" y="810.5" width="4.0" height="1" fill="#333" opacity="0.72"/>
<rect x="61.0" y="810.5" width="4.0" height="1" fill="#333" opacity="0.72"/>
<rect x="65.6" y="810.5" width="2.0" height="1" fill="#333" opacity="0.72"/>
<rect x="68.2" y="810.5" width="2.0" height="1" fill="#333" opacity="0.72"/>
<rect x="70.8" y="810.5" width="2.0" height="1" fill="#333" opacity="0.72"/>
<rect x="74.2" y="810.5" width="2.0" height="1" fill="#333" opacity="0.72"/>
<rect x="76.8" y="810.5" width="4.0" height="1" fill="#333" opacity="0.72"/>
<rect x="82.2" y="810.5" width="2.0" height="1" fill="#333" opacity="0.72"/>
<rect x="85.2" y="810.5" width="3.0" height="1" fill="#333" opacity="0.72"/>
<rect x="88.8" y="810.5" width="2.0" height="1" fill="#333" opacity="0.72"/>
<rect x="91.8" y="810.5" width="3.0" height="1" fill="#333" opacity="0.72"/>
<rect x="96.2" y="810.5" width="3.0" height="1" fill="#333" opacity="0.72"/>
<rect x="99.8" y="810.5" width="1.5" height="1" fill="#333" opacity="0.72"/>
<rect x="102.3" y="810.5" width="4.0" height="1" fill="#333" opacity="0.72"/>
<rect x="107.3" y="810.5" width="4.0" height="1" fill="#333" opacity="0.72"/>
<rect x="112.3" y="810.5" width="1.5" height="1" fill="#333" opacity="0.72"/>
<rect x="114.8" y="810.5" width="1.2" height="1" fill="#333" opacity="0.72"/>
<rect x="55.0" y="813" width="2.0" height="1" fill="#333" opacity="0.72"/>
<rect x="57.6" y="813" width="2.0" height="1" fill="#333" opacity="0.72"/>
<rect x="60.6" y="813" width="2.0" height="1" fill="#333" opacity="0.72"/>
<rect x="63.2" y="813" width="3.0" height="1" fill="#333" opacity="0.72"/>
<rect x="67.6" y="813" width="1.5" height="1" fill="#333" opacity="0.72"/>
<rect x="69.7" y="813" width="1.5" height="1" fill="#333" opacity="0.72"/>
<rect x="72.6" y="813" width="2.0" height="1" fill="#333" opacity="0.72"/>
<rect x="76.0" y="813" width="1.5" height="1" fill="#333" opacity="0.72"/>
<rect x="78.5" y="813" width="1.5" height="1" fill="#333" opacity="0.72"/>
<rect x="80.6" y="813" width="2.0" height="1" fill="#333" opacity="0.72"/>
<rect x="84.0" y="813" width="4.0" height="1" fill="#333" opacity="0.72"/>
<rect x="88.6" y="813" width="3.0" height="1" fill="#333" opacity="0.72"/>
<rect x="92.6" y="813" width="3.0" height="1" fill="#333" opacity="0.72"/>
<rect x="96.6" y="813" width="1.5" height="1" fill="#333" opacity="0.72"/>
<rect x="98.7" y="813" width="4.0" height="1" fill="#333" opacity="0.72"/>
<rect x="103.7" y="813" width="4.0" height="1" fill="#333" opacity="0.72"/>
<rect x="108.7" y="813" width="3.0" height="1" fill="#333" opacity="0.72"/>
<rect x="112.3" y="813" width="2.0" height="1" fill="#333" opacity="0.72"/>
<rect x="114.9" y="813" width="3.0" height="1" fill="#333" opacity="0.72"/>
<rect x="119.3" y="813" width="2.7" height="1" fill="#333" opacity="0.72"/>
<rect x="54.0" y="815.5" width="2.0" height="1" fill="#333" opacity="0.72"/>
<rect x="57.4" y="815.5" width="1.5" height="1" fill="#333" opacity="0.72"/>
<rect x="59.5" y="815.5" width="3.0" height="1" fill="#333" opacity="0.72"/>
<rect x="63.1" y="815.5" width="1.5" height="1" fill="#333" opacity="0.72"/>
<rect x="66.0" y="815.5" width="3.0" height="1" fill="#333" opacity="0.72"/>
<rect x="70.4" y="815.5" width="1.5" height="1" fill="#333" opacity="0.72"/>
<rect x="73.3" y="815.5" width="3.0" height="1" fill="#333" opacity="0.72"/>
<rect x="77.7" y="815.5" width="3.0" height="1" fill="#333" opacity="0.72"/>
<rect x="81.3" y="815.5" width="3.0" height="1" fill="#333" opacity="0.72"/>
<rect x="84.9" y="815.5" width="3.0" height="1" fill="#333" opacity="0.72"/>
<rect x="89.3" y="815.5" width="2.0" height="1" fill="#333" opacity="0.72"/>
<rect x="92.7" y="815.5" width="2.0" height="1" fill="#333" opacity="0.72"/>
<rect x="95.3" y="815.5" width="4.0" height="1" fill="#333" opacity="0.72"/>
<rect x="100.7" y="815.5" width="2.0" height="1" fill="#333" opacity="0.72"/>
<rect x="103.3" y="815.5" width="4.0" height="1" fill="#333" opacity="0.72"/>
<rect x="108.3" y="815.5" width="1.5" height="1" fill="#333" opacity="0.72"/>
<rect x="110.4" y="815.5" width="3.0" height="1" fill="#333" opacity="0.72"/>
<rect x="114.4" y="815.5" width="3.0" height="1" fill="#333" opacity="0.72"/>
<rect x="118.0" y="815.5" width="2.0" height="1" fill="#333" opacity="0.72"/>
<rect x="56.0" y="818" width="3.0" height="1" fill="#333" opacity="0.72"/>
<rect x="60.0" y="818" width="1.5" height="1" fill="#333" opacity="0.72"/>
<rect x="62.1" y="818" width="1.5" height="1" fill="#333" opacity="0.72"/>
<rect x="64.2" y="818" width="4.0" height="1" fill="#333" opacity="0.72"/>
<rect x="68.8" y="818" width="3.0" height="1" fill="#333" opacity="0.72"/>
<rect x="72.4" y="818" width="4.0" height="1" fill="#333" opacity="0.72"/>
<rect x="77.8" y="818" width="1.5" height="1" fill="#333" opacity="0.72"/>
<rect x="80.3" y="818" width="3.0" height="1" fill="#333" opacity="0.72"/>
<rect x="84.7" y="818" width="1.5" height="1" fill="#333" opacity="0.72"/>
<rect x="87.6" y="818" width="1.5" height="1" fill="#333" opacity="0.72"/>
<rect x="90.1" y="818" width="2.0" height="1" fill="#333" opacity="0.72"/>
<rect x="93.1" y="818" width="2.0" height="1" fill="#333" opacity="0.72"/>
<rect x="96.1" y="818" width="3.0" height="1" fill="#333" opacity="0.72"/>
<rect x="99.7" y="818" width="4.0" height="1" fill="#333" opacity="0.72"/>
<rect x="104.7" y="818" width="4.0" height="1" fill="#333" opacity="0.72"/>
<rect x="110.1" y="818" width="1.5" height="1" fill="#333" opacity="0.72"/>
<rect x="113.0" y="818" width="2.0" height="1" fill="#333" opacity="0.72"/>
<rect x="115.6" y="818" width="2.0" height="1" fill="#333" opacity="0.72"/>
<rect x="55.0" y="820.5" width="2.0" height="1" fill="#333" opacity="0.72"/>
<rect x="58.4" y="820.5" width="4.0" height="1" fill="#333" opacity="0.72"/>
<rect x="63.8" y="820.5" width="2.0" height="1" fill="#333" opacity="0.72"/>
<rect x="67.2" y="820.5" width="4.0" height="1" fill="#333" opacity="0.72"/>
<rect x="72.6" y="820.5" width="3.0" height="1" fill="#333" opacity="0.72"/>
<rect x="76.2" y="820.5" width="2.0" height="1" fill="#333" opacity="0.72"/>
<rect x="78.8" y="820.5" width="1.5" height="1" fill="#333" opacity="0.72"/>
<rect x="81.7" y="820.5" width="1.5" height="1" fill="#333" opacity="0.72"/>
<rect x="84.6" y="820.5" width="2.0" height="1" fill="#333" opacity="0.72"/>
<rect x="87.6" y="820.5" width="2.0" height="1" fill="#333" opacity="0.72"/>
<rect x="90.2" y="820.5" width="1.5" height="1" fill="#333" opacity="0.72"/>
<rect x="92.7" y="820.5" width="2.0" height="1" fill="#333" opacity="0.72"/>
<rect x="95.7" y="820.5" width="2.0" height="1" fill="#333" opacity="0.72"/>
<rect x="99.1" y="820.5" width="3.0" height="1" fill="#333" opacity="0.72"/>
<rect x="103.1" y="820.5" width="4.0" height="1" fill="#333" opacity="0.72"/>
<rect x="107.7" y="820.5" width="1.5" height="1" fill="#333" opacity="0.72"/>
<rect x="110.6" y="820.5" width="3.0" height="1" fill="#333" opacity="0.72"/>
<rect x="114.6" y="820.5" width="1.4" height="1" fill="#333" opacity="0.72"/>
<rect x="54.0" y="823" width="2.0" height="1" fill="#333" opacity="0.72"/>
<rect x="57.4" y="823" width="2.0" height="1" fill="#333" opacity="0.72"/>
<rect x="60.8" y="823" width="1.5" height="1" fill="#333" opacity="0.72"/>
<rect x="63.3" y="823" width="2.0" height="1" fill="#333" opacity="0.72"/>
<rect x="66.7" y="823" width="1.5" height="1" fill="#333" opacity="0.72"/>
<rect x="68.8" y="823" width="2.0" height="1" fill="#333" opacity="0.72"/>
<rect x="71.4" y="823" width="4.0" height="1" fill="#333" opacity="0.72"/>
<rect x="76.8" y="823" width="1.5" height="1" fill="#333" opacity="0.72"/>
<rect x="79.7" y="823" width="1.5" height="1" fill="#333" opacity="0.72"/>
<rect x="82.2" y="823" width="4.0" height="1" fill="#333" opacity="0.72"/>
<rect x="86.8" y="823" width="1.5" height="1" fill="#333" opacity="0.72"/>
<rect x="88.9" y="823" width="2.0" height="1" fill="#333" opacity="0.72"/>
<rect x="91.9" y="823" width="1.5" height="1" fill="#333" opacity="0.72"/>
<rect x="94.0" y="823" width="4.0" height="1" fill="#333" opacity="0.72"/>
<rect x="99.4" y="823" width="1.5" height="1" fill="#333" opacity="0.72"/>
<rect x="101.5" y="823" width="4.0" height="1" fill="#333" opacity="0.72"/>
<rect x="106.5" y="823" width="2.0" height="1" fill="#333" opacity="0.72"/>
<rect x="109.9" y="823" width="3.0" height="1" fill="#333" opacity="0.72"/>
<rect x="113.9" y="823" width="4.0" height="1" fill="#333" opacity="0.72"/>
<rect x="119.3" y="823" width="2.0" height="1" fill="#333" opacity="0.72"/>
<rect x="56.0" y="825.5" width="3.0" height="1" fill="#333" opacity="0.72"/>
<rect x="60.4" y="825.5" width="2.0" height="1" fill="#333" opacity="0.72"/>
<rect x="63.4" y="825.5" width="2.0" height="1" fill="#333" opacity="0.72"/>
<rect x="66.4" y="825.5" width="1.5" height="1" fill="#333" opacity="0.72"/>
<rect x="68.9" y="825.5" width="4.0" height="1" fill="#333" opacity="0.72"/>
<rect x="73.9" y="825.5" width="1.5" height="1" fill="#333" opacity="0.72"/>
<rect x="76.8" y="825.5" width="2.0" height="1" fill="#333" opacity="0.72"/>
<rect x="79.8" y="825.5" width="1.5" height="1" fill="#333" opacity="0.72"/>
<rect x="81.9" y="825.5" width="3.0" height="1" fill="#333" opacity="0.72"/>
<rect x="85.5" y="825.5" width="2.0" height="1" fill="#333" opacity="0.72"/>
<rect x="88.9" y="825.5" width="3.0" height="1" fill="#333" opacity="0.72"/>
<rect x="92.5" y="825.5" width="3.0" height="1" fill="#333" opacity="0.72"/>
<rect x="96.1" y="825.5" width="4.0" height="1" fill="#333" opacity="0.72"/>
<rect x="100.7" y="825.5" width="1.5" height="1" fill="#333" opacity="0.72"/>
<rect x="103.2" y="825.5" width="4.0" height="1" fill="#333" opacity="0.72"/>
<rect x="107.8" y="825.5" width="2.0" height="1" fill="#333" opacity="0.72"/>
<rect x="110.4" y="825.5" width="4.0" height="1" fill="#333" opacity="0.72"/>
<rect x="115.8" y="825.5" width="4.0" height="1" fill="#333" opacity="0.72"/>
<rect x="55.0" y="828" width="4.0" height="1" fill="#333" opacity="0.72"/>
<rect x="59.6" y="828" width="3.0" height="1" fill="#333" opacity="0.72"/>
<rect x="63.6" y="828" width="1.5" height="1" fill="#333" opacity="0.72"/>
<rect x="66.5" y="828" width="3.0" height="1" fill="#333" opacity="0.72"/>
<rect x="70.1" y="828" width="3.0" height="1" fill="#333" opacity="0.72"/>
<rect x="74.5" y="828" width="4.0" height="1" fill="#333" opacity="0.72"/>
<rect x="79.5" y="828" width="1.5" height="1" fill="#333" opacity="0.72"/>
<rect x="82.0" y="828" width="3.0" height="1" fill="#333" opacity="0.72"/>
<rect x="86.4" y="828" width="3.0" height="1" fill="#333" opacity="0.72"/>
<rect x="90.8" y="828" width="1.5" height="1" fill="#333" opacity="0.72"/>
<rect x="92.9" y="828" width="2.0" height="1" fill="#333" opacity="0.72"/>
<rect x="95.5" y="828" width="1.5" height="1" fill="#333" opacity="0.72"/>
<rect x="98.0" y="828" width="3.0" height="1" fill="#333" opacity="0.72"/>
<rect x="101.6" y="828" width="2.0" height="1" fill="#333" opacity="0.72"/>
<rect x="104.6" y="828" width="2.0" height="1" fill="#333" opacity="0.72"/>
<rect x="107.6" y="828" width="3.0" height="1" fill="#333" opacity="0.72"/>
<rect x="111.6" y="828" width="2.0" height="1" fill="#333" opacity="0.72"/>
<rect x="115.0" y="828" width="3.0" height="1" fill="#333" opacity="0.72"/>
<rect x="56.0" y="832.5" width="3.0" height="1" fill="#333" opacity="0.72"/>
<rect x="59.6" y="832.5" width="3.0" height="1" fill="#333" opacity="0.72"/>
<rect x="63.2" y="832.5" width="2.0" height="1" fill="#333" opacity="0.72"/>
<rect x="66.2" y="832.5" width="1.5" height="1" fill="#333" opacity="0.72"/>
<rect x="68.7" y="832.5" width="1.5" height="1" fill="#333" opacity="0.72"/>
<rect x="71.6" y="832.5" width="1.5" height="1" fill="#333" opacity="0.72"/>
<rect x="74.1" y="832.5" width="1.5" height="1" fill="#333" opacity="0.72"/>
<rect x="77.0" y="832.5" width="2.0" height="1" fill="#333" opacity="0.72"/>
<rect x="79.6" y="832.5" width="3.0" height="1" fill="#333" opacity="0.72"/>
<rect x="83.2" y="832.5" width="4.0" height="1" fill="#333" opacity="0.72"/>
<rect x="87.8" y="832.5" width="3.0" height="1" fill="#333" opacity="0.72"/>
<rect x="92.2" y="832.5" width="4.0" height="1" fill="#333" opacity="0.72"/>
<rect x="97.2" y="832.5" width="2.0" height="1" fill="#333" opacity="0.72"/>
<rect x="99.8" y="832.5" width="2.0" height="1" fill="#333" opacity="0.72"/>
<rect x="102.4" y="832.5" width="2.0" height="1" fill="#333" opacity="0.72"/>
<rect x="105.4" y="832.5" width="1.5" height="1" fill="#333" opacity="0.72"/>
<rect x="107.5" y="832.5" width="2.0" height="1" fill="#333" opacity="0.72"/>
<rect x="110.5" y="832.5" width="3.0" height="1" fill="#333" opacity="0.72"/>
<rect x="114.9" y="832.5" width="2.0" height="1" fill="#333" opacity="0.72"/>
<rect x="117.9" y="832.5" width="4.0" height="1" fill="#333" opacity="0.72"/>
<rect x="59.0" y="835" width="2.0" height="1" fill="#333" opacity="0.72"/>
<rect x="62.0" y="835" width="3.0" height="1" fill="#333" opacity="0.72"/>
<rect x="65.6" y="835" width="3.0" height="1" fill="#333" opacity="0.72"/>
<rect x="69.2" y="835" width="1.5" height="1" fill="#333" opacity="0.72"/>
<rect x="71.3" y="835" width="2.0" height="1" fill="#333" opacity="0.72"/>
<rect x="74.7" y="835" width="4.0" height="1" fill="#333" opacity="0.72"/>
<rect x="79.3" y="835" width="4.0" height="1" fill="#333" opacity="0.72"/>
<rect x="83.9" y="835" width="4.0" height="1" fill="#333" opacity="0.72"/>
<rect x="89.3" y="835" width="4.0" height="1" fill="#333" opacity="0.72"/>
<rect x="94.7" y="835" width="4.0" height="1" fill="#333" opacity="0.72"/>
<rect x="100.1" y="835" width="3.0" height="1" fill="#333" opacity="0.72"/>
<rect x="104.5" y="835" width="2.0" height="1" fill="#333" opacity="0.72"/>
<rect x="107.1" y="835" width="3.0" height="1" fill="#333" opacity="0.72"/>
<rect x="110.7" y="835" width="2.0" height="1" fill="#333" opacity="0.72"/>
<rect x="113.7" y="835" width="3.0" height="1" fill="#333" opacity="0.72"/>
<rect x="117.3" y="835" width="2.0" height="1" fill="#333" opacity="0.72"/>
<rect x="56.0" y="837.5" width="1.5" height="1" fill="#333" opacity="0.72"/>
<rect x="58.9" y="837.5" width="3.0" height="1" fill="#333" opacity="0.72"/>
<rect x="62.9" y="837.5" width="2.0" height="1" fill="#333" opacity="0.72"/>
<rect x="65.5" y="837.5" width="1.5" height="1" fill="#333" opacity="0.72"/>
<rect x="68.4" y="837.5" width="4.0" height="1" fill="#333" opacity="0.72"/>
<rect x="73.8" y="837.5" width="3.0" height="1" fill="#333" opacity="0.72"/>
<rect x="78.2" y="837.5" width="2.0" height="1" fill="#333" opacity="0.72"/>
<rect x="81.6" y="837.5" width="3.0" height="1" fill="#333" opacity="0.72"/>
<rect x="85.2" y="837.5" width="4.0" height="1" fill="#333" opacity="0.72"/>
<rect x="89.8" y="837.5" width="2.0" height="1" fill="#333" opacity="0.72"/>
<rect x="92.8" y="837.5" width="4.0" height="1" fill="#333" opacity="0.72"/>
<rect x="97.4" y="837.5" width="3.0" height="1" fill="#333" opacity="0.72"/>
<rect x="101.4" y="837.5" width="3.0" height="1" fill="#333" opacity="0.72"/>
<rect x="105.8" y="837.5" width="3.0" height="1" fill="#333" opacity="0.72"/>
<rect x="109.4" y="837.5" width="1.5" height="1" fill="#333" opacity="0.72"/>
<rect x="111.9" y="837.5" width="2.0" height="1" fill="#333" opacity="0.72"/>
<rect x="114.9" y="837.5" width="2.0" height="1" fill="#333" opacity="0.72"/>
<rect x="59.0" y="840" width="3.0" height="1" fill="#333" opacity="0.72"/>
<rect x="63.0" y="840" width="1.5" height="1" fill="#333" opacity="0.72"/>
<rect x="65.5" y="840" width="3.0" height="1" fill="#333" opacity="0.72"/>
<rect x="69.9" y="840" width="2.0" height="1" fill="#333" opacity="0.72"/>
<rect x="72.5" y="840" width="1.5" height="1" fill="#333" opacity="0.72"/>
<rect x="74.6" y="840" width="3.0" height="1" fill="#333" opacity="0.72"/>
<rect x="78.2" y="840" width="2.0" height="1" fill="#333" opacity="0.72"/>
<rect x="81.2" y="840" width="1.5" height="1" fill="#333" opacity="0.72"/>
<rect x="83.7" y="840" width="1.5" height="1" fill="#333" opacity="0.72"/>
<rect x="86.2" y="840" width="3.0" height="1" fill="#333" opacity="0.72"/>
<rect x="90.6" y="840" width="2.0" height="1" fill="#333" opacity="0.72"/>
<rect x="93.2" y="840" width="2.0" height="1" fill="#333" opacity="0.72"/>
<rect x="96.6" y="840" width="4.0" height="1" fill="#333" opacity="0.72"/>
<rect x="101.6" y="840" width="4.0" height="1" fill="#333" opacity="0.72"/>
<rect x="106.2" y="840" width="3.0" height="1" fill="#333" opacity="0.72"/>
<rect x="110.6" y="840" width="2.0" height="1" fill="#333" opacity="0.72"/>
<rect x="113.2" y="840" width="4.0" height="1" fill="#333" opacity="0.72"/>
<rect x="118.6" y="840" width="2.0" height="1" fill="#333" opacity="0.72"/>
<rect x="56.0" y="842.5" width="1.5" height="1" fill="#333" opacity="0.72"/>
<rect x="58.9" y="842.5" width="2.0" height="1" fill="#333" opacity="0.72"/>
<rect x="61.5" y="842.5" width="1.5" height="1" fill="#333" opacity="0.72"/>
<rect x="63.6" y="842.5" width="2.0" height="1" fill="#333" opacity="0.72"/>
<rect x="67.0" y="842.5" width="3.0" height="1" fill="#333" opacity="0.72"/>
<rect x="70.6" y="842.5" width="4.0" height="1" fill="#333" opacity="0.72"/>
<rect x="75.6" y="842.5" width="1.5" height="1" fill="#333" opacity="0.72"/>
<rect x="78.5" y="842.5" width="1.5" height="1" fill="#333" opacity="0.72"/>
<rect x="81.4" y="842.5" width="2.0" height="1" fill="#333" opacity="0.72"/>
<rect x="84.4" y="842.5" width="3.0" height="1" fill="#333" opacity="0.72"/>
<rect x="88.0" y="842.5" width="4.0" height="1" fill="#333" opacity="0.72"/>
<rect x="92.6" y="842.5" width="1.5" height="1" fill="#333" opacity="0.72"/>
<rect x="95.5" y="842.5" width="1.5" height="1" fill="#333" opacity="0.72"/>
<rect x="98.4" y="842.5" width="4.0" height="1" fill="#333" opacity="0.72"/>
<rect x="103.4" y="842.5" width="1.5" height="1" fill="#333" opacity="0.72"/>
<rect x="105.9" y="842.5" width="2.0" height="1" fill="#333" opacity="0.72"/>
<rect x="109.3" y="842.5" width="2.0" height="1" fill="#333" opacity="0.72"/>
<rect x="111.9" y="842.5" width="4.0" height="1" fill="#333" opacity="0.72"/>
<rect x="116.9" y="842.5" width="3.1" height="1" fill="#333" opacity="0.72"/>
<rect x="52" y="845" width="73.5" height="1" fill="#999" opacity=".5"/>
<rect x="22" y="860" width="134" height="39.5" fill="#efefef"/>
</svg>
<div class="t b"  style="-webkit-text-stroke:0;opacity:0.9;left:25.7px;top:859.4px;font-size:4.9px;letter-spacing:0px;transform:scaleX(0.949);color:#2a2a2a">Lorem Ipsum is simply dummy text of the printing and</div>
<div class="t b"  style="-webkit-text-stroke:0;opacity:0.9;left:25.7px;top:865.8px;font-size:4.9px;letter-spacing:0px;transform:scaleX(0.960);color:#2a2a2a">typesetting industry. Lorem Ipsum has been the</div>
<div class="t b"  style="-webkit-text-stroke:0;opacity:0.62;left:25.7px;top:872.2px;font-size:4.9px;letter-spacing:0px;transform:scaleX(0.946);color:#2a2a2a">industry's standard dummy text ever since the 1500s,</div>
<div class="t b"  style="-webkit-text-stroke:0;opacity:0.62;left:25.7px;top:878.6px;font-size:4.9px;letter-spacing:0px;transform:scaleX(0.966);color:#2a2a2a">when an unknown printer took a galley of type and</div>
<div class="t b"  style="-webkit-text-stroke:0;opacity:0.62;left:25.7px;top:885.0px;font-size:4.9px;letter-spacing:0px;transform:scaleX(0.963);color:#2a2a2a">scrambled it to make a type specimen book.</div>
<svg class="a" style="left:0;top:0" width="320" height="1108" viewBox="0 0 320 1108">
<rect x="45" y="929.3" width="4" height="1.5" fill="#555" opacity=".85"/>
<rect x="50.5" y="929.3" width="4" height="1.5" fill="#555" opacity=".85"/>
<rect x="57" y="929.3" width="4" height="1.5" fill="#555" opacity=".85"/>
<rect x="70" y="929.3" width="1.5" height="1.5" fill="#555" opacity=".85"/>
<rect x="73.5" y="929.3" width="1.5" height="1.5" fill="#555" opacity=".85"/>
<rect x="78" y="929.3" width="4" height="1.5" fill="#555" opacity=".85"/>
<rect x="87" y="929.3" width="5" height="1.5" fill="#555" opacity=".85"/>
<rect x="93.5" y="929.3" width="5" height="1.5" fill="#555" opacity=".85"/>
<rect x="100" y="929.3" width="3" height="1.5" fill="#555" opacity=".85"/>
<rect x="108" y="929.3" width="4" height="1.5" fill="#555" opacity=".85"/>
<rect x="114" y="929.3" width="4" height="1.5" fill="#555" opacity=".85"/>
<rect x="121" y="929.3" width="4" height="1.5" fill="#555" opacity=".85"/>
<rect x="62" y="926" width="1.2" height="2" fill="#555" opacity=".7"/><rect x="64.2" y="926" width="1.2" height="2" fill="#555" opacity=".7"/><path d="M128.5,928 l1.4,-2.6 M131,928 l1.4,-2.6" stroke="#555" stroke-width="1" opacity=".8"/>
<rect x="22.5" y="942.5" width="133" height="44" fill="#fdfdfd" stroke="#e4e4e4" stroke-width="1"/>
<rect x="34" y="951.5" width="120" height="28" fill="#fff" stroke="#f7c40c" stroke-width="2"/>
<circle cx="31.7" cy="980.5" r="5.7" fill="#f7c40c"/>
</svg>
<div class="t b" style="-webkit-text-stroke:0;left:37.6px;top:952.6px;font-size:5.8px;letter-spacing:0px;transform:scaleX(1.027);color:#1c1c1c">Lorem Ipsum is simply dummy text of</div>
<div class="t b" style="-webkit-text-stroke:0;left:37.6px;top:962.2px;font-size:5.8px;letter-spacing:0px;transform:scaleX(1.030);color:#1c1c1c">the printing and typesetting industry</div>
<svg class="a" style="left:0;top:0" width="320" height="1108" viewBox="0 0 320 1108">
<rect x="51" y="1013.5" width="1" height="1.5" fill="#666" opacity=".8"/>
<rect x="65" y="1013.5" width="2" height="1.5" fill="#666" opacity=".8"/>
<rect x="66.5" y="1013.5" width="1.2" height="1.5" fill="#666" opacity=".8"/>
<rect x="104" y="1013.5" width="1.5" height="1.5" fill="#666" opacity=".8"/>
<rect x="116" y="1013.5" width="1.2" height="1.5" fill="#666" opacity=".8"/>
<rect x="122" y="1013.5" width="1.5" height="1.5" fill="#666" opacity=".8"/>
</svg>
<div class="t r" style="-webkit-text-stroke:0;left:60.6px;top:905.6px;font-size:13.4px;letter-spacing:0.9px;transform:scaleX(1.130);color:#666">margós</div>
<div class="t r" style="-webkit-text-stroke:0;left:49.8px;top:992.1px;font-size:13.4px;letter-spacing:0.9px;transform:scaleX(1.070);color:#666">Kiegészítő</div>
<div class="a" style="left:285px;top:178px;width:21px;height:840px;background:linear-gradient(90deg,#878b8d,#a9adaf 25%,#d2d4d5 60%,#e6e6e6 85%,#dcdcdc)"></div>
<div class="a" style="left:285px;top:198px;width:17.6px;height:664.5px;background:linear-gradient(#fdfdfd,#f4f4f4 30%,#eaeaea);border-left:1px solid #8a8a8a;border-right:1px solid #c4c4c4;border-bottom:1px solid #8d8d8d;border-radius:0 0 2.5px 2.5px;box-shadow:0 2px 2px rgba(60,60,60,.55),1px 0 1px rgba(90,90,90,.35)"></div>
<div class="a" style="left:302.6px;top:198px;width:2.8px;height:664px;background:linear-gradient(#cfd2d2,#b4b6b7 40%,#9c9e9f)"></div>
<div class="a" style="left:290px;top:525.5px;width:8px;height:12.5px;background:repeating-linear-gradient(#9a9a9a 0,#9a9a9a 1.3px,transparent 1.3px,transparent 2.7px)"></div>
<div class="a" style="left:285px;top:178px;width:20.6px;height:20.6px;background:linear-gradient(#fcfcfc,#e6e6e6);border:1px solid #b9b9b9;border-left-color:#909090;border-bottom-color:#8f8f8f"></div>
<div class="a ar up" style="left:290.8px;top:185.4px;height:5.8px"></div>
<div class="a" style="left:285px;top:997px;width:20.6px;height:21px;background:linear-gradient(#fcfcfc,#e4e4e4);border:1px solid #9c9c9c;border-left-color:#808080"></div>
<div class="a ar dn" style="left:290.8px;top:1004.6px;height:5.8px"></div>
<div class="a cb" style="left:22px;top:132.5px;width:279px;height:29px;border-color:#9c9c9c"></div>
<div class="a" style="left:277px;top:133.5px;width:1px;height:27px;background:#a6a6a6"></div>
<svg class="a" style="left:283px;top:142px" width="12" height="10"><path d="M1.5,1.5 L6,7.5 L10.5,1.5" fill="none" stroke="#222" stroke-width="1.7"/></svg>
<div class="t b" style="left:27.6px;top:138.6px;font-size:13.4px;letter-spacing:0.3px;transform:scaleX(1.166)">base templates</div>
<div class="t r" style="left:49.0px;top:1036.1px;font-size:13.4px;letter-spacing:0.9px;transform:scaleX(1.150)">Add:</div>
<div class="t b" style="left:97.3px;top:1036.1px;font-size:13.4px;letter-spacing:0.3px;transform:scaleX(1.161)">file</div>
<div class="t b" style="left:145.0px;top:1036.1px;font-size:13.4px;letter-spacing:0.3px;transform:scaleX(1.107)">online</div>
<div class="t b" style="left:213.9px;top:1036.1px;font-size:13.4px;letter-spacing:0.3px;transform:scaleX(1.186)">offline</div>
<div class="a" style="left:134px;top:1037px;width:1px;height:15px;background:#d0d0d0"></div>
<div class="a" style="left:203px;top:1037px;width:1px;height:15px;background:#d0d0d0"></div>
<div class="a acc" style="top:1061px;border-top:1px solid #a0a4a4;border-bottom:none;height:28px"></div>
<div class="t b" style="left:47.8px;top:1066.9px;font-size:13.4px;letter-spacing:0.3px;transform:scaleX(1.108)">Events</div>
<div class="a" style="left:309px;top:41px;width:13px;height:1048px;background:#ececec"></div>
<div class="a" style="left:305.3px;top:177px;width:3.6px;height:842px;background:linear-gradient(rgba(255,255,255,.35),rgba(255,255,255,0) 45%),linear-gradient(90deg,#6c6e70 0,#8e9294 26%,#a6aaab 55%,#c6caca 100%)"></div>
<div class="a" style="left:312.7px;top:555px;width:7px;height:21px;background:repeating-linear-gradient(90deg,#a4a4a4 0,#a4a4a4 1.4px,transparent 1.4px,transparent 2.8px)"></div>
<div class="a main"></div><div class="a tb"></div>
<div class="a btn" style="left:336px;width:31.5px"></div>
<div class="a btn d" style="left:378.3px;width:31.5px"></div>
<div class="a btn" style="left:421.2px;width:31.5px"></div>
<div class="a sep" style="left:464px"></div>
<div class="a btn d" style="left:477px;width:31.5px"></div>
<div class="a btn" style="left:519.7px;width:31.5px"></div>
<div class="a btn d" style="left:562.2px;width:31.5px"></div>
<div class="a sep" style="left:605.5px"></div>
<div class="a btn d" style="left:618px;width:90.5px;border-color:#868686"></div>
<div class="a" style="left:685px;top:51px;width:1px;height:27px;background:#8e8e8e"></div>
<div class="a sep" style="left:720px"></div>
<div class="a btn" style="left:733px;width:31.5px"></div>
<div class="a btn" style="left:776px;width:31.5px"></div>
<div class="a sep" style="left:818.7px"></div>
<div class="a" style="left:831px;top:50px;width:64.5px;height:29px;border:2px solid #3a9cec;border-radius:6px;background:#cdcdcd"></div>
<div class="a btn d" style="left:906px;width:72px;border-color:#9a9a9a"></div>
<div class="a btn d" style="left:989px;width:31.5px"></div>
<div class="a btn d" style="left:1031.7px;width:31.5px"></div>
<div class="a sep" style="left:1075px"></div>
<div class="a btn d" style="left:1087.6px;width:31.5px"></div>
<div class="a btn d" style="left:1130.3px;width:31.5px"></div>
<div class="a sep" style="left:1173.6px"></div>
<div class="a btn d" style="left:1186.2px;width:31.5px"></div>
<div class="t b" style="left:647.5px;top:56.3px;font-size:13.4px;letter-spacing:0.3px;transform:scaleX(1.346)">left</div>
<div class="t b" style="left:848.6px;top:56.3px;font-size:13.4px;letter-spacing:0.3px;transform:scaleX(1.124)">Edit</div>
<div class="t b" style="left:923.3px;top:56.2px;font-size:13.4px;letter-spacing:0.3px;transform:scaleX(1.149)">Meta</div>
<svg class="a" style="left:323px;top:41px" width="1370" height="46" viewBox="323 41 1370 46">
<defs>
<linearGradient id="fl" x1="0" y1="0" x2="0" y2="1"><stop offset="0" stop-color="#b4b4b4"/><stop offset="1" stop-color="#7c7c7c"/></linearGradient>
<linearGradient id="rb" x1="0" y1="0" x2="1" y2="1"><stop offset="0" stop-color="#6fa0d8"/><stop offset=".5" stop-color="#2a62b0"/><stop offset="1" stop-color="#1a4a98"/></linearGradient>
<linearGradient id="pr" x1="0" y1="0" x2="0" y2="1"><stop offset="0" stop-color="#f4f4f2"/><stop offset="1" stop-color="#b9b9b5"/></linearGradient>
<linearGradient id="yl" x1="0" y1="0" x2="1" y2="1"><stop offset="0" stop-color="#f8e84a"/><stop offset=".5" stop-color="#fff6a0"/><stop offset="1" stop-color="#e6c80e"/></linearGradient>
<linearGradient id="gr" x1="0" y1="0" x2="1" y2="1"><stop offset="0" stop-color="#58c818"/><stop offset=".5" stop-color="#a4ec6c"/><stop offset="1" stop-color="#48b010"/></linearGradient>
<linearGradient id="pg" x1="0" y1="0" x2="0" y2="1"><stop offset="0" stop-color="#d9d9d5"/><stop offset="1" stop-color="#ececea"/></linearGradient>
<linearGradient id="hb" x1="0" y1="0" x2="1" y2="1"><stop offset="0" stop-color="#6a9ee0"/><stop offset="1" stop-color="#1a50a8"/></linearGradient>
<filter id="tb1"><feGaussianBlur stdDeviation=".45"/></filter>
</defs>
<g filter="url(#tb1)"><path d="M342.2,54 H361 Q362,54 362,55 V74 Q362,75 361,75 H343.5 L341.2,72.7 V55 Q341.2,54 342.2,54 Z" fill="url(#fl)" stroke="#4c4c4c" stroke-width="1.3"/><rect x="345.3" y="55.3" width="13" height="9.6" fill="#fdfdfd"/><path d="M346.5,58.2 H357 M346.5,60.8 H357" stroke="#c9c9c9" stroke-width="1.1"/><rect x="346" y="66.8" width="11.5" height="7.6" fill="#dedede"/><rect x="347" y="66.8" width="6.2" height="7.6" fill="#c2c2c2"/><rect x="349.3" y="68.3" width="2.1" height="4.6" fill="#333"/></g>
<g filter="url(#tb1)" fill="url(#rb)" stroke="#1d4c94" stroke-width=".5"><path d="M385,63.5 Q384.6,56 391.5,54.2 Q397,53.2 400.2,57 L403.3,53.8 V63.6 H393.6 L396.8,60.3 Q394.5,58 391.5,59.2 Q389.6,60.3 389.2,63.5 Z"/><path d="M403.6,65.3 Q404,72.8 397.1,74.6 Q391.6,75.6 388.4,71.8 L385.3,75 V65.2 H395 L391.8,68.5 Q394.1,70.8 397.1,69.6 Q399,68.5 399.4,65.3 Z"/></g>
<path d="M387,60 q2,-4.5 6,-4.6 q3.5,0 6,2.5" stroke="#a9c8ec" stroke-width="1.2" fill="none" opacity=".8" filter="url(#tb1)"/>
<path d="M401.5,69 q-2,4.5 -6,4.6 q-3.5,0 -6,-2.5" stroke="#a9c8ec" stroke-width="1.2" fill="none" opacity=".7" filter="url(#tb1)"/>
<g filter="url(#tb1)"><rect x="431.5" y="55.3" width="11" height="9" fill="#e4e4e2" stroke="#b4b4b0" stroke-width=".9"/><path d="M428.5,62.5 H445.5 L447.5,66 V72.5 Q447.5,73.6 446.4,73.6 H427.6 Q426.5,73.6 426.5,72.5 V66 Z" fill="url(#pr)" stroke="#8c8c88" stroke-width="1.1"/><rect x="428" y="66" width="18" height="4" fill="#fafafa" stroke="#bdbdb9" stroke-width=".6"/><rect x="428.2" y="70.8" width="17.6" height="1.6" fill="#cfcfcb"/></g>
<g filter="url(#tb1)">
<rect x="482.6" y="54.3" width="12.3" height="13.2" rx="1" fill="#fbfbfa" stroke="#878785" stroke-width="1.2"/>
<line x1="484.8" y1="57.3" x2="492.70000000000005" y2="57.3" stroke="#c4c4bf" stroke-width="1.3"/>
<line x1="484.8" y1="59.9" x2="492.70000000000005" y2="59.9" stroke="#c4c4bf" stroke-width="1.3"/>
<line x1="484.8" y1="62.5" x2="492.70000000000005" y2="62.5" stroke="#c4c4bf" stroke-width="1.3"/>
<line x1="484.8" y1="65.1" x2="489.70000000000005" y2="65.1" stroke="#c4c4bf" stroke-width="1.3"/>
<rect x="489.8" y="60.8" width="12" height="13.4" rx="1" fill="#fbfbfa" stroke="#878785" stroke-width="1.2"/>
<line x1="492.0" y1="63.8" x2="499.6" y2="63.8" stroke="#c4c4bf" stroke-width="1.3"/>
<line x1="492.0" y1="66.39999999999999" x2="499.6" y2="66.39999999999999" stroke="#c4c4bf" stroke-width="1.3"/>
<line x1="492.0" y1="69.0" x2="499.6" y2="69.0" stroke="#c4c4bf" stroke-width="1.3"/>
<line x1="492.0" y1="71.6" x2="499.6" y2="71.6" stroke="#c4c4bf" stroke-width="1.3"/>
<line x1="492.0" y1="74.2" x2="496.6" y2="74.2" stroke="#c4c4bf" stroke-width="1.3"/>
</g>
<g filter="url(#tb1)" stroke="#5c5c5c" stroke-linejoin="round"><path d="M530.4,55.2 Q528.6,59.6 531,63.2 L536.6,68.6 L537.8,67.2 Q533.6,61 530.4,55.2 Z" fill="#dcdcdc" stroke-width="1"/><path d="M539.4,55.2 Q541.2,59.6 538.8,63.2 L533.2,68.6 L532,67.2 Q536.2,61 539.4,55.2 Z" fill="#ececec" stroke-width="1"/><ellipse cx="530.3" cy="70.8" rx="2.5" ry="3.1" fill="none" stroke-width="1.5"/><ellipse cx="539.5" cy="70.8" rx="2.5" ry="3.1" fill="none" stroke-width="1.5"/></g>
<g filter="url(#tb1)"><rect x="568.2" y="55.6" width="16.3" height="18.8" rx="1.6" fill="#ecba6c" stroke="#b5761c" stroke-width="1.3"/><rect x="569.6" y="57" width="3.2" height="16" fill="#f6d59c" opacity=".7"/><rect x="573.2" y="55.4" width="9" height="3.4" rx="1.4" fill="#50545a" stroke="#3a3e44" stroke-width=".5"/><path d="M575.4,56 Q575.4,53.2 577.7,53.2 Q580,53.2 580,56 Z" fill="#50545a" stroke="#3a3e44" stroke-width=".5"/><rect x="576" y="54.6" width="3.4" height="2.6" rx=".8" fill="#d4d4d4"/><rect x="575.8" y="60.8" width="12.6" height="13.6" fill="#fcfcfc" stroke="#8e8e8c" stroke-width="1.3"/><path d="M578.3,64.3 H586 M578.3,67 H586 M578.3,69.7 H582.5" stroke="#b4b4b0" stroke-width="1.3"/></g>
<rect x="623.6" y="55.3" width="2" height="18.3" fill="#161616"/>
<rect x="628.6" y="56.8" width="14.2" height="5.4" fill="#a3c08a" stroke="#6c8c54" stroke-width="1"/>
<rect x="628.6" y="65.2" width="7.6" height="5" fill="#90aad2" stroke="#5b79a9" stroke-width="1"/>
<path d="M692,61.2 L696.7,67.2 L701.4,61.2" fill="none" stroke="#222" stroke-width="1.7"/>
<g filter="url(#tb1)"><path d="M738.2,62.4 L746.8,53.8 L747.4,58.2 Q755.8,59 756.6,67.5 Q757,73.5 752.6,74.8 Q749.6,75 750.3,72.6 Q752.8,70.2 751.6,67.6 Q750.2,66.2 747.4,66.6 L746.8,71 Z" fill="url(#yl)" stroke="#b49c06" stroke-width="1.1" stroke-linejoin="round"/><path d="M741.5,62.8 H750.5" stroke="#e8c908" stroke-width="1.2" opacity=".8"/></g>
<g filter="url(#tb1)"><path d="M802,62.4 L793.4,53.8 L792.8,58.2 Q784.4,59 783.6,67.5 Q783.2,73.5 787.6,74.8 Q790.6,75 789.9,72.6 Q787.4,70.2 788.6,67.6 Q790,66.2 792.8,66.6 L793.4,71 Z" fill="url(#gr)" stroke="#3a9808" stroke-width="1.1" stroke-linejoin="round"/><path d="M789.5,62.8 H798.5" stroke="#5ccc20" stroke-width="1.2" opacity=".8"/></g>
<g filter="url(#tb1)"><rect x="994" y="53.8" width="21.6" height="3.2" rx="1.2" fill="#0c0c0c"/><rect x="996.2" y="57" width="17.3" height="12.4" fill="#fff" stroke="#0c0c0c" stroke-width="1.6"/><rect x="1003.6" y="56.8" width="1.6" height="2" fill="#0c0c0c"/><rect x="1000.2" y="61.3" width="3.6" height="3.8" fill="#e8391c" stroke="#3a1a10" stroke-width=".7"/><circle cx="1006.3" cy="60.4" r="2" fill="#eed478" stroke="#4a4020" stroke-width=".6"/><path d="M1005.6,62.6 L1008.6,66.6 H1002.6 Z" fill="#4a78b4" stroke="#18283c" stroke-width=".6"/><path d="M1001.5,70.3 H1007 L1004.3,71.5 Z" fill="#0c0c0c"/><path d="M1004.2,70.5 V74.6 M1003,71 L999.6,73.2 M1005.5,71 L1008.8,73.2" stroke="#0c0c0c" stroke-width="1.3"/></g>
<g filter="url(#tb1)"><path d="M1055.6,55.6 Q1057,56.6 1056.2,58 L1050,63.4 L1048.8,62.2 L1054,56 Q1054.8,55.2 1055.6,55.6 Z" fill="#9a9a98" stroke="#787876" stroke-width=".6"/><path d="M1049.6,62 L1045.2,66.4" stroke="#8a8a88" stroke-width="1.6"/><path d="M1038.2,68.6 L1042.6,65.4 L1045.8,68.2 L1044.6,72.6 L1040.2,74.6 L1037,72.4 Z" fill="url(#hb)" stroke="#1c4c9c" stroke-width=".7"/><path d="M1039.8,71.6 L1043.2,67.8" stroke="#9cc0f0" stroke-width="1" opacity=".8"/><path d="M1038.2,59.6 Q1037.4,57.4 1039,56 L1041,58 L1043,57.2 L1043.2,55.2 L1041.6,54.6 Q1044,53.6 1045.8,55.6 Q1046.6,57.4 1045.8,59 L1055.8,70.2 Q1056.6,72 1055,72.8 Q1053.6,73.2 1052.8,72.2 L1042.8,61 Q1040,61.6 1038.2,59.6 Z" fill="#ececea" stroke="#c2c2be" stroke-width=".9"/></g>
<g filter="url(#tb1)"><rect x="1093.4" y="55.4" width="20.6" height="19.2" fill="url(#pg)"/><path d="M1093.6,74.6 V57.2 Q1093.6,55.4 1095.4,55.4 H1103" fill="none" stroke="#8c8c8a" stroke-width="1.1"/><circle cx="1107.8" cy="60.1" r="6" fill="#f4e12a"/><circle cx="1107.8" cy="60.1" r="6" fill="none" stroke="#f7ec7a" stroke-width="1"/><path d="M1107.8,55.9 L1109,58.6 L1111.9,58.9 L1109.7,60.9 L1110.4,63.8 L1107.8,62.3 L1105.2,63.8 L1105.9,60.9 L1103.7,58.9 L1106.6,58.6 Z" fill="#fff" stroke="#fff" stroke-width=".8" stroke-linejoin="round"/></g>
<g filter="url(#tb1)"><rect x="1137.4" y="62.4" width="11" height="10.8" fill="#fbfbfb" stroke="#9a9a98" stroke-width="1.3"/><path d="M1155.4,55.2 Q1152,63 1148.6,65.2 L1150.6,67.6 L1140.2,66.2 L1142.6,57.2 L1144.8,60.6 Q1150,58.8 1155.4,55.2 Z" fill="#4a82c8" stroke="#2a5ca4" stroke-width=".8" stroke-linejoin="round"/></g>
<g filter="url(#tb1)"><path d="M1196.2,54.2 H1208.6 L1211.4,57 V72.8 Q1211.4,74.6 1209.6,74.6 H1196.2 Q1194.4,74.6 1194.4,72.8 V56 Q1194.4,54.2 1196.2,54.2 Z" fill="#fafafa" stroke="#0c0c0c" stroke-width="1.5"/><rect x="1192.2" y="58.2" width="16.6" height="12" fill="#8fb6e4" stroke="#0c0c0c" stroke-width="1.5"/><path d="M1193,69.4 V65 L1196,62.2 L1199.4,65.4 L1202.2,63.4 L1205.4,65.8 L1208,64 V69.4 Z" fill="#5c9c54"/><path d="M1193,65 L1196,62.2 L1199.4,65.4 L1202.2,63.4 L1205.4,65.8 L1208,64" fill="none" stroke="#3c5c34" stroke-width=".6"/><path d="M1201.4,58.8 L1202.6,60.7 L1201.4,62.6 L1200.2,60.7 Z" fill="#f8f4a0"/></g>
</svg>
<svg class="a" style="left:460px;top:96px" width="1100" height="730" viewBox="460 96 1100 730"><defs><filter id="cs" x="-2%" y="-2%" width="104%" height="104%"><feGaussianBlur stdDeviation="1.3"/></filter></defs><rect x="469.2" y="105" width="1082" height="712.6" fill="#000" opacity=".42" filter="url(#cs)"/><rect x="467.5" y="102.6" width="1080.7" height="711.6" fill="#fff" stroke="#2a20e8" stroke-width="1.7"/></svg>
<div class="a gl" style="left:514px;top:103px;width:1px;height:711px"></div>
<div class="a gl" style="left:789px;top:103px;width:1px;height:711px"></div>
<div class="a gl" style="left:468px;top:186px;width:1080px;height:1px"></div>
<div class="a gl" style="left:468px;top:291px;width:1080px;height:1px"></div>
<div class="a hlf" style="left:489.4px;top:145.2px;width:338.6px;height:190.0px"></div>
<svg class="a" style="left:482.2px;top:138px" width="353.00000000000006" height="204.39999999999998"><path fill-rule="evenodd" fill="#006a83" d="M4,0 H349.00000000000006 Q353.00000000000006,0 353.00000000000006,4 V200.39999999999998 Q353.00000000000006,204.39999999999998 349.00000000000006,204.39999999999998 H4 Q0,204.39999999999998 0,200.39999999999998 V4 Q0,0 4,0 Z M7.7,7.7 V196.7 H345.30000000000007 V7.7 Z"/></svg>
<div class="a" style="left:501px;top:172px;width:301px;height:132px;background:#d1d1d1"></div>
<div class="a" style="left:514px;top:186px;width:276px;height:105px;background:#f2d3f1;border:1px solid #bdb4bd;border-top-color:#b5b5b5"></div>
<div class="t" style="left:532px;top:201.3px;font-size:28.9px;line-height:36.6px;letter-spacing:.05px;color:#555">Kisméretű pop up.
Katt ide!</div>
<div class="a hd" style="left:501px;top:172px"></div>
<div class="a hd" style="left:645px;top:172px"></div>
<div class="a hd" style="left:789px;top:172px"></div>
<div class="a hd" style="left:501px;top:232px"></div>
<div class="a hd" style="left:789px;top:232px"></div>
<div class="a hd" style="left:501px;top:291px"></div>
<div class="a hd" style="left:645px;top:291px"></div>
<div class="a hd" style="left:789px;top:291px"></div>
<div class="a fp"></div><div class="a fpi"></div>
<div class="t b" style="left:481.8px;top:837.8px;font-size:13.4px;letter-spacing:0.3px;transform:scaleX(1.123)">Field properties</div>
<div class="t r" style="left:500.9px;top:893.8px;font-size:13.4px;letter-spacing:0.9px;transform:scaleX(1.125)">effect</div>
<div class="t r" style="left:496.5px;top:930.8px;font-size:13.4px;letter-spacing:0.9px;transform:scaleX(1.145)">layout</div>
<div class="t r" style="left:490.9px;top:965.9px;font-size:13.4px;letter-spacing:0.9px;transform:scaleX(1.074)">align H</div>
<div class="t r" style="left:491.8px;top:1002.8px;font-size:13.4px;letter-spacing:0.9px;transform:scaleX(1.087)">align V</div>
<div class="a cb" style="left:554px;top:887px;width:235px"></div>
<div class="a cbs" style="left:760px;top:892px"></div>
<div class="a ar dn" style="left:769px;top:899.2px;height:5.8px"></div>
<div class="a cb" style="left:554px;top:924px;width:235px"></div>
<div class="a cbs" style="left:760px;top:929px"></div>
<div class="a ar dn" style="left:769px;top:936.2px;height:5.8px"></div>
<div class="t b" style="left:564.7px;top:930.9px;font-size:13.4px;letter-spacing:0.3px;transform:scaleX(1.182)">vertical</div>
<div class="a cb" style="left:554px;top:962px;width:149px"></div>
<div class="a cbs" style="left:674px;top:967px"></div>
<div class="a ar dn" style="left:683px;top:974.2px;height:5.8px"></div>
<div class="t b" style="left:564.7px;top:968.3px;font-size:13.4px;letter-spacing:0.3px;transform:scaleX(1.214)">center</div>
<div class="a cb" style="left:554px;top:999px;width:149px"></div>
<div class="a cbs" style="left:674px;top:1004px"></div>
<div class="a ar dn" style="left:683px;top:1011.2px;height:5.8px"></div>
<div class="t b" style="left:564.8px;top:1005.8px;font-size:13.4px;letter-spacing:0.3px;transform:scaleX(1.139)">middle</div>
<div class="a spi" style="left:714px;top:962px;width:48px"></div>
<div class="a spb" style="left:761px;top:962px"></div>
<div class="a ar up" style="left:770.4px;top:965.9px"></div>
<div class="a ar dn" style="left:770.4px;top:980.4px"></div>
<div class="t r" style="left:720.1px;top:968.7px;font-size:13.4px;letter-spacing:1px;transform:scaleX(1.012);color:#0a3742">0</div>
<div class="a spi" style="left:714px;top:999px;width:48px"></div>
<div class="a spb" style="left:761px;top:999px"></div>
<div class="a ar up" style="left:770.4px;top:1002.9px"></div>
<div class="a ar dn" style="left:770.4px;top:1017.4px"></div>
<div class="t r" style="left:720.1px;top:1005.7px;font-size:13.4px;letter-spacing:1px;transform:scaleX(1.012);color:#0a3742">0</div>
<div class="t r" style="left:837.0px;top:890.8px;font-size:13.4px;letter-spacing:0.9px;transform:scaleX(1.041)">width</div>
<div class="t r" style="left:827.4px;top:928.1px;font-size:13.4px;letter-spacing:0.9px;transform:scaleX(1.149)">height</div>
<div class="t r" style="left:817.0px;top:968.2px;font-size:13.4px;letter-spacing:0.9px;transform:scaleX(1.070)">width %</div>
<div class="t r" style="left:807.4px;top:1005.4px;font-size:13.4px;letter-spacing:0.9px;transform:scaleX(1.124)">height %</div>
<div class="a spi" style="left:886px;top:887px;width:48px"></div>
<div class="a spb" style="left:933px;top:887px"></div>
<div class="a ar up" style="left:942.4px;top:890.9px"></div>
<div class="a ar dn" style="left:942.4px;top:905.4px"></div>
<div class="t r" style="left:892.0px;top:893.7px;font-size:13.4px;letter-spacing:1px;transform:scaleX(1.137);color:#0a3742">206</div>
<div class="a spi" style="left:886px;top:924px;width:48px"></div>
<div class="a spb" style="left:933px;top:924px"></div>
<div class="a ar up" style="left:942.4px;top:927.9px"></div>
<div class="a ar dn" style="left:942.4px;top:942.4px"></div>
<div class="t r" style="left:892.0px;top:930.7px;font-size:13.4px;letter-spacing:1px;transform:scaleX(1.136);color:#0a3742">79</div>
<div class="a spi" style="left:886px;top:962px;width:48px"></div>
<div class="a spb" style="left:933px;top:962px"></div>
<div class="a ar up" style="left:942.4px;top:965.9px"></div>
<div class="a ar dn" style="left:942.4px;top:980.4px"></div>
<div class="t r" style="left:892.1px;top:968.7px;font-size:13.4px;letter-spacing:1px;transform:scaleX(1.012);color:#0a3742">0</div>
<div class="a spi" style="left:886px;top:999px;width:48px"></div>
<div class="a spb" style="left:933px;top:999px"></div>
<div class="a ar up" style="left:942.4px;top:1002.9px"></div>
<div class="a ar dn" style="left:942.4px;top:1017.4px"></div>
<div class="t r" style="left:892.1px;top:1005.7px;font-size:13.4px;letter-spacing:1px;transform:scaleX(1.012);color:#0a3742">0</div>
<div class="a chk" style="left:970px;top:892px"></div><div class="a chk" style="left:970px;top:930px"></div>
<div class="t r" style="left:1007.4px;top:893.8px;font-size:13.4px;letter-spacing:0.9px;transform:scaleX(1.125)">position x</div>
<div class="t r" style="left:1008.7px;top:930.8px;font-size:13.4px;letter-spacing:0.9px;transform:scaleX(1.104)">position y</div>
<div class="t r" style="left:1032.6px;top:965.3px;font-size:13.4px;letter-spacing:0.9px;transform:scaleX(1.116)">border</div>
<div class="a spi" style="left:1093px;top:887px;width:48px"></div>
<div class="a spb" style="left:1140px;top:887px"></div>
<div class="a ar up" style="left:1149.4px;top:890.9px"></div>
<div class="a ar dn" style="left:1149.4px;top:905.4px"></div>
<div class="t r" style="left:1099.0px;top:893.7px;font-size:13.4px;letter-spacing:1px;transform:scaleX(1.136);color:#0a3742">34</div>
<div class="a spi" style="left:1093px;top:924px;width:48px"></div>
<div class="a spb" style="left:1140px;top:924px"></div>
<div class="a ar up" style="left:1149.4px;top:927.9px"></div>
<div class="a ar dn" style="left:1149.4px;top:942.4px"></div>
<div class="t r" style="left:1099.0px;top:930.7px;font-size:13.4px;letter-spacing:1px;transform:scaleX(1.136);color:#0a3742">61</div>
<div class="a spi" style="left:1093px;top:962px;width:48px"></div>
<div class="a spb" style="left:1140px;top:962px"></div>
<div class="a ar up" style="left:1149.4px;top:965.9px"></div>
<div class="a ar dn" style="left:1149.4px;top:980.4px"></div>
<div class="t r" style="left:1099.1px;top:968.7px;font-size:13.4px;letter-spacing:1px;transform:scaleX(1.012);color:#0a3742">0</div>
<div class="a" style="left:1177.5px;top:962.5px;width:28.5px;height:28px;background:#f2f2f2;border:1px solid #e6e6e6;border-right-color:#9c9c9c;border-bottom-color:#9c9c9c"></div>
<div class="a" style="left:1180px;top:964.6px;width:22.6px;height:23px;background:#000;border:1px solid #777"></div>
<div class="t r" style="left:1228.5px;top:893.8px;font-size:13.4px;letter-spacing:0.9px;transform:scaleX(1.142)">z-index</div>
<div class="t r" style="left:1239.6px;top:968.2px;font-size:13.4px;letter-spacing:0.9px;transform:scaleX(1.068)">corner</div>
<div class="t r" style="left:1230.1px;top:1005.5px;font-size:13.4px;letter-spacing:0.9px;transform:scaleX(1.067)">shadow</div>
<div class="a spi" style="left:1297px;top:887px;width:48px"></div>
<div class="a spb" style="left:1344px;top:887px"></div>
<div class="a ar up" style="left:1353.4px;top:890.9px"></div>
<div class="a ar dn" style="left:1353.4px;top:905.4px"></div>
<div class="t r" style="left:1303.1px;top:893.7px;font-size:13.4px;letter-spacing:1px;transform:scaleX(1.012);color:#0a3742">0</div>
<div class="a spi" style="left:1297px;top:962px;width:48px"></div>
<div class="a spb" style="left:1344px;top:962px"></div>
<div class="a ar up" style="left:1353.4px;top:965.9px"></div>
<div class="a ar dn" style="left:1353.4px;top:980.4px"></div>
<div class="t r" style="left:1303.1px;top:968.7px;font-size:13.4px;letter-spacing:1px;transform:scaleX(1.012);color:#0a3742">0</div>
<div class="a spi" style="left:1297px;top:999px;width:48px"></div>
<div class="a spb" style="left:1344px;top:999px"></div>
<div class="a ar up" style="left:1353.4px;top:1002.9px"></div>
<div class="a ar dn" style="left:1353.4px;top:1017.4px"></div>
<div class="t r" style="left:1303.1px;top:1005.7px;font-size:13.4px;letter-spacing:1px;transform:scaleX(1.012);color:#0a3742">0</div>
<div class="a hlf" style="left:1199.2px;top:923.6px;width:177.4px;height:31.6px"></div>
<svg class="a" style="left:1192px;top:916.4px" width="191.79999999999995" height="46.0"><path fill-rule="evenodd" fill="#006a83" d="M4,0 H187.79999999999995 Q191.79999999999995,0 191.79999999999995,4 V42.0 Q191.79999999999995,46.0 187.79999999999995,46.0 H4 Q0,46.0 0,42.0 V4 Q0,0 4,0 Z M7.7,7.7 V38.3 H184.09999999999997 V7.7 Z"/></svg>
<div class="a hlf" style="left:997.6px;top:992.2px;width:222.0px;height:44.5px"></div>
<svg class="a" style="left:990.4px;top:985px" width="236.39999999999998" height="58.90000000000009"><path fill-rule="evenodd" fill="#006a83" d="M4,0 H232.39999999999998 Q236.39999999999998,0 236.39999999999998,4 V54.90000000000009 Q236.39999999999998,58.90000000000009 232.39999999999998,58.90000000000009 H4 Q0,58.90000000000009 0,54.90000000000009 V4 Q0,0 4,0 Z M7.7,7.7 V51.20000000000009 H228.7 V7.7 Z"/></svg>
<div class="t r" style="left:1224.7px;top:930.8px;font-size:13.4px;letter-spacing:0.9px;transform:scaleX(1.122);color:#a8a8a8">padding</div>
<div class="a spi dis" style="left:1297px;top:924px;width:48px"></div>
<div class="a spb dis" style="left:1344px;top:924px"></div>
<div class="a ar up dis" style="left:1353.4px;top:927.9px"></div>
<div class="a ar dn dis" style="left:1353.4px;top:942.4px"></div>
<div class="t r" style="left:1303.0px;top:930.7px;font-size:13.4px;letter-spacing:1px;transform:scaleX(1.136);color:#8e9a9e">10</div>
<div class="t r" style="left:1022.0px;top:1002.8px;font-size:13.4px;letter-spacing:0.9px;transform:scaleX(1.089);color:#a8a8a8">bckgrnd</div>
<div class="a spi dis" style="left:1093px;top:999px;width:48px"></div>
<div class="a spb dis" style="left:1140px;top:999px"></div>
<div class="a ar up dis" style="left:1149.4px;top:1002.9px"></div>
<div class="a ar dn dis" style="left:1149.4px;top:1017.4px"></div>
<div class="t r" style="left:1099.0px;top:1005.7px;font-size:13.4px;letter-spacing:1px;transform:scaleX(1.137);color:#8e9a9e">100</div>
<div class="a" style="left:1174.5px;top:996.6px;width:34.2px;height:34.4px;background:#a9d6f6;border-radius:1px"></div>
<div class="a" style="left:1177px;top:999.2px;width:29.2px;height:29.2px;background:#e9e9e9;border:1px solid #f3f3f3;border-right-color:#b0b0b0;border-bottom-color:#b0b0b0"></div>
<div class="a" style="left:1179.6px;top:1001.8px;width:23.4px;height:23.4px;background:#f2d3f1;border:1px solid #e2d0e2;border-top-color:#9c9c9c;border-left-color:#a8a8a8"></div>
<div class="a" style="left:1196px;top:1020.4px;width:7px;height:5px;background:#e6e6e6"></div>
<div class="a ar dn" style="left:1197.4px;top:1021.6px;width:5.6px;height:3.2px;background:#5e5e5e"></div>
<svg class="a" style="left:0;top:0" width="1709" height="130" viewBox="0 0 1709 130">
<defs><filter id="m1"><feGaussianBlur stdDeviation=".4"/></filter></defs>
<g filter="url(#m1)"><rect x="1663" y="15.6" width="9.4" height="6.8" fill="#fff" stroke="#000" stroke-width="1.4"/><rect x="1662.3" y="14.9" width="10.8" height="2.4" fill="#000"/><rect x="1660.1" y="19.8" width="9.4" height="6.6" fill="#fff" stroke="#000" stroke-width="1.4"/><rect x="1659.4" y="19.1" width="10.8" height="2.6" fill="#000"/><path d="M1682.4,15.6 L1692.6,25.6 M1692.6,15.6 L1682.4,25.6" stroke="#2c2c2c" stroke-width="1.4"/></g>
<g filter="url(#m1)">
<rect x="21.4" y="45.3" width="6.4" height="5.4" rx="1" fill="#fdfdfd" stroke="#8e8e8c" stroke-width="1.3"/><rect x="23.4" y="47.7" width="2.4000000000000004" height=".9" fill="#d8d8d6"/>
<rect x="28.4" y="45.3" width="6.2" height="5.4" rx="1" fill="#fdfdfd" stroke="#8e8e8c" stroke-width="1.3"/><rect x="30.4" y="47.7" width="2.2" height=".9" fill="#d8d8d6"/>
<rect x="34.8" y="45" width="6.8" height="6" rx="1" fill="#9adf5c" stroke="#5cb61e" stroke-width="1.4"/><rect x="36.4" y="47.8" width="3.5999999999999996" height="1.2" fill="#d4f4b4"/>
<rect x="23" y="51.8" width="7" height="5.4" rx="1" fill="#fdfdfd" stroke="#8e8e8c" stroke-width="1.3"/><rect x="25" y="54.2" width="3" height=".9" fill="#d8d8d6"/>
<rect x="30.8" y="51.8" width="6.6" height="5.4" rx="1" fill="#fdfdfd" stroke="#8e8e8c" stroke-width="1.3"/><rect x="32.8" y="54.2" width="2.5999999999999996" height=".9" fill="#d8d8d6"/>
<rect x="21.6" y="58.6" width="10" height="6" rx="1" fill="#9adf5c" stroke="#5cb61e" stroke-width="1.4"/><rect x="23.200000000000003" y="61.4" width="6.8" height="1.2" fill="#d4f4b4"/>
<rect x="32.6" y="58.6" width="6.4" height="5.8" rx="1" fill="#fdfdfd" stroke="#8e8e8c" stroke-width="1.3"/><rect x="34.6" y="61.2" width="2.4000000000000004" height=".9" fill="#d8d8d6"/>
</g>
<g filter="url(#m1)"><path d="M33.4,74.6 Q33.4,73.4 34.6,73.2 L39.6,73.8 Q40.8,74 40.8,75.2 V86 Q40.8,87.2 40.2,87.4 L40.4,91 L36.4,87.4 H33.4 Z" fill="#fafafa" stroke="#a9a9a7" stroke-width="1.1"/><path d="M21.6,77.4 Q21.6,75.6 23.4,75.4 L30.6,75 Q32.8,75 32.8,77 V87.2 Q32.8,89 31.6,89.2 L31.2,93.4 L27.4,89.6 L23,89 Q21.6,88.6 21.6,87 Z" fill="#fcfcfc" stroke="#9c9c9a" stroke-width="1.2"/><text x="24.6" y="86.6" font-family="Liberation Sans" font-size="10" font-weight="700" fill="#7aa4dc">?</text><text x="34.4" y="83.6" font-family="Liberation Sans" font-size="8.5" font-weight="700" fill="#9cbce4">?</text></g>
<g filter="url(#m1)"><path d="M24.4,100.8 H36.4 L40.4,104.8 V120.8 H24.4 Z" fill="#fdfdfd" stroke="#8a8a88" stroke-width="1.4" stroke-linejoin="round"/><rect x="25.4" y="102" width="10" height="18" fill="#e2e2e0" opacity=".7"/><path d="M36.2,101 V105 H40.2" fill="#fff" stroke="#b4b4b2" stroke-width=".8"/><circle cx="30" cy="109.4" r="3.4" fill="#f4f4f4" stroke="#3c3c3c" stroke-width="1.5"/><path d="M32.6,112.2 L36.8,116.6" stroke="#4a4a4a" stroke-width="2.6" stroke-linecap="round"/></g>
</svg>
<svg class="a" style="left:0;top:1056px" width="1709" height="52" viewBox="0 1056 1709 52">
<g filter="url(#m1)">
<polygon points="32.15,1078.82 32.15,1080.38 30.13,1081.03 29.60,1081.94 30.05,1084.01 28.70,1084.79 27.13,1083.37 26.07,1083.37 24.50,1084.79 23.15,1084.01 23.60,1081.94 23.07,1081.03 21.05,1080.38 21.05,1078.82 23.07,1078.17 23.60,1077.26 23.15,1075.19 24.50,1074.41 26.07,1075.83 27.13,1075.83 28.70,1074.41 30.05,1075.19 29.60,1077.26 30.13,1078.17" fill="#fafafa" stroke="#787876" stroke-width="1.1" stroke-linejoin="round"/>
<circle cx="26.6" cy="1079.6" r="1.5" fill="#e4e4e2" stroke="#8a8a88" stroke-width=".9"/>
<polygon points="41.39,1081.70 40.61,1083.05 38.54,1082.60 37.63,1083.13 36.98,1085.15 35.42,1085.15 34.77,1083.13 33.86,1082.60 31.79,1083.05 31.01,1081.70 32.43,1080.13 32.43,1079.07 31.01,1077.50 31.79,1076.15 33.86,1076.60 34.77,1076.07 35.42,1074.05 36.98,1074.05 37.63,1076.07 38.54,1076.60 40.61,1076.15 41.39,1077.50 39.97,1079.07 39.97,1080.13" fill="#fafafa" stroke="#787876" stroke-width="1.1" stroke-linejoin="round"/>
<circle cx="36.2" cy="1079.6" r="1.5" fill="#e4e4e2" stroke="#8a8a88" stroke-width=".9"/>
<polygon points="41.45,1069.42 41.45,1070.98 39.43,1071.63 38.90,1072.54 39.35,1074.61 38.00,1075.39 36.43,1073.97 35.37,1073.97 33.80,1075.39 32.45,1074.61 32.90,1072.54 32.37,1071.63 30.35,1070.98 30.35,1069.42 32.37,1068.77 32.90,1067.86 32.45,1065.79 33.80,1065.01 35.37,1066.43 36.43,1066.43 38.00,1065.01 39.35,1065.79 38.90,1067.86 39.43,1068.77" fill="#fafafa" stroke="#787876" stroke-width="1.1" stroke-linejoin="round"/>
<circle cx="35.9" cy="1070.2" r="1.5" fill="#e4e4e2" stroke="#8a8a88" stroke-width=".9"/>
</g>
<path d="M1688.5,1100 L1704.5,1084 M1693.2,1100 L1704.5,1088.7 M1698,1100 L1704.5,1093.5" stroke="#4a4a4a" stroke-width="1.2"/>
</svg>
</div>
</body>
</html>
